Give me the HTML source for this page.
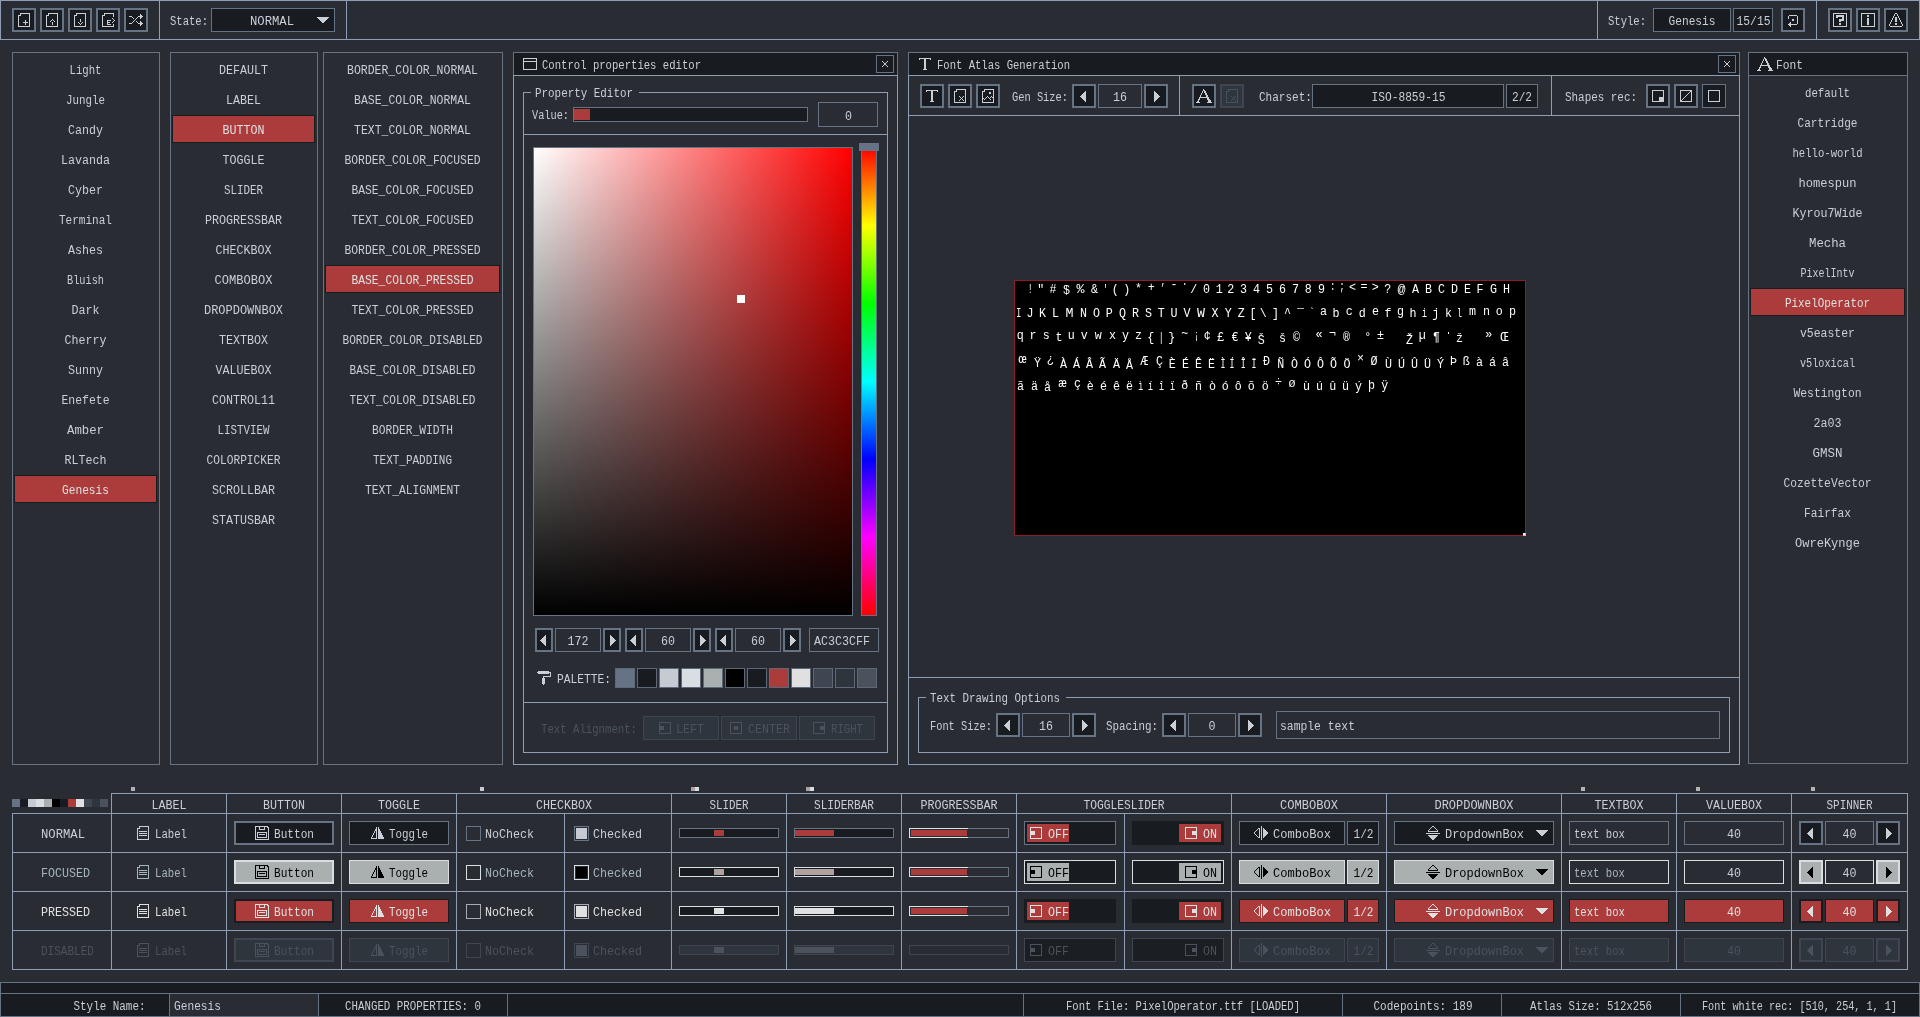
<!DOCTYPE html>
<html lang="en">
<head>
<meta charset="utf-8">
<title>rGuiStyler - Genesis</title>
<style>
html,body{margin:0;padding:0;background:#292c33;overflow:hidden}
body{width:1920px;height:1017px;position:relative}
svg{position:absolute;left:0;top:0;display:block}
#labels{will-change:transform}
svg rect,svg path{shape-rendering:crispEdges}
svg text{font-family:"Liberation Mono",monospace;font-size:13.7px;white-space:pre}
</style>
</head>
<body>
<svg width="1920" height="1017" viewBox="0 0 1920 1017">
<!-- toolbar -->
<path d="M0 0h160v40h-160zM1 1v38h158v-38z" fill="#8e9eb4" fill-rule="evenodd"/>
<path d="M159 0h188v40h-188zM160 1v38h186v-38z" fill="#8e9eb4" fill-rule="evenodd"/>
<path d="M346 0h1252v40h-1252zM347 1v38h1250v-38z" fill="#8e9eb4" fill-rule="evenodd"/>
<path d="M1597 0h220v40h-220zM1598 1v38h218v-38z" fill="#8e9eb4" fill-rule="evenodd"/>
<path d="M1816 0h104v40h-104zM1817 1v38h102v-38z" fill="#8e9eb4" fill-rule="evenodd"/>
<rect x="12" y="8" width="24" height="24" fill="#667384"/>
<rect x="14" y="10" width="20" height="20" fill="#181b1f"/>
<path d="M20 13h10v1h-10zM20 14h1v1h-1zM29 14h1v1h-1zM18 15h3v1h-3zM29 15h1v1h-1zM18 16h1v1h-1zM29 16h1v1h-1zM18 17h1v1h-1zM29 17h1v1h-1zM18 18h1v1h-1zM29 18h1v1h-1zM18 19h1v1h-1zM29 19h1v1h-1zM18 20h1v1h-1zM25 20h1v1h-1zM29 20h1v1h-1zM18 21h1v1h-1zM25 21h1v1h-1zM29 21h1v1h-1zM18 22h1v1h-1zM23 22h5v1h-5zM29 22h1v1h-1zM18 23h1v1h-1zM25 23h1v1h-1zM29 23h1v1h-1zM18 24h1v1h-1zM25 24h1v1h-1zM29 24h1v1h-1zM18 25h1v1h-1zM29 25h1v1h-1zM18 26h12v1h-12z" fill="#c9ced7"/>
<rect x="40" y="8" width="24" height="24" fill="#667384"/>
<rect x="42" y="10" width="20" height="20" fill="#181b1f"/>
<path d="M48 13h10v1h-10zM48 14h1v1h-1zM57 14h1v1h-1zM46 15h3v1h-3zM57 15h1v1h-1zM46 16h1v1h-1zM57 16h1v1h-1zM46 17h1v1h-1zM57 17h1v1h-1zM46 18h1v1h-1zM57 18h1v1h-1zM46 19h1v1h-1zM52 19h1v1h-1zM57 19h1v1h-1zM46 20h1v1h-1zM51 20h1v1h-1zM53 20h1v1h-1zM57 20h1v1h-1zM46 21h1v1h-1zM50 21h1v1h-1zM54 21h1v1h-1zM57 21h1v1h-1zM46 22h1v1h-1zM52 22h1v1h-1zM57 22h1v1h-1zM46 23h1v1h-1zM52 23h1v1h-1zM57 23h1v1h-1zM46 24h1v1h-1zM52 24h1v1h-1zM57 24h1v1h-1zM46 25h1v1h-1zM57 25h1v1h-1zM46 26h12v1h-12z" fill="#c9ced7"/>
<rect x="68" y="8" width="24" height="24" fill="#667384"/>
<rect x="70" y="10" width="20" height="20" fill="#181b1f"/>
<path d="M76 13h10v1h-10zM76 14h1v1h-1zM85 14h1v1h-1zM74 15h3v1h-3zM85 15h1v1h-1zM74 16h1v1h-1zM85 16h1v1h-1zM74 17h1v1h-1zM85 17h1v1h-1zM74 18h1v1h-1zM85 18h1v1h-1zM74 19h1v1h-1zM80 19h1v1h-1zM85 19h1v1h-1zM74 20h1v1h-1zM80 20h1v1h-1zM85 20h1v1h-1zM74 21h1v1h-1zM80 21h1v1h-1zM85 21h1v1h-1zM74 22h1v1h-1zM78 22h1v1h-1zM82 22h1v1h-1zM85 22h1v1h-1zM74 23h1v1h-1zM79 23h1v1h-1zM81 23h1v1h-1zM85 23h1v1h-1zM74 24h1v1h-1zM80 24h1v1h-1zM85 24h1v1h-1zM74 25h1v1h-1zM85 25h1v1h-1zM74 26h12v1h-12z" fill="#c9ced7"/>
<rect x="96" y="8" width="24" height="24" fill="#667384"/>
<rect x="98" y="10" width="20" height="20" fill="#181b1f"/>
<path d="M104 13h10v1h-10zM104 14h1v1h-1zM113 14h1v1h-1zM102 15h3v1h-3zM113 15h1v1h-1zM102 16h1v1h-1zM113 16h1v1h-1zM102 17h1v1h-1zM102 18h1v1h-1zM112 18h1v1h-1zM102 19h1v1h-1zM113 19h1v1h-1zM102 20h1v1h-1zM107 20h4v1h-4zM114 20h1v1h-1zM102 21h1v1h-1zM107 21h1v1h-1zM113 21h1v1h-1zM102 22h1v1h-1zM107 22h3v1h-3zM112 22h1v1h-1zM102 23h1v1h-1zM107 23h1v1h-1zM102 24h1v1h-1zM107 24h4v1h-4zM113 24h1v1h-1zM102 25h1v1h-1zM113 25h1v1h-1zM102 26h12v1h-12z" fill="#c9ced7"/>
<rect x="124" y="8" width="24" height="24" fill="#667384"/>
<rect x="126" y="10" width="20" height="20" fill="#181b1f"/>
<path d="M140 14h1v1h-1zM140 15h2v1h-2zM129 16h3v1h-3zM138 16h5v1h-5zM132 17h1v1h-1zM137 17h1v1h-1zM140 17h2v1h-2zM133 18h1v1h-1zM136 18h1v1h-1zM140 18h1v1h-1zM135 19h1v1h-1zM134 20h1v1h-1zM133 21h1v1h-1zM136 21h1v1h-1zM140 21h1v1h-1zM132 22h1v1h-1zM137 22h1v1h-1zM140 22h2v1h-2zM129 23h3v1h-3zM138 23h5v1h-5zM140 24h2v1h-2zM140 25h1v1h-1z" fill="#c9ced7"/>
<rect x="211" y="8" width="124" height="24" fill="#667384"/>
<rect x="212" y="9" width="122" height="22" fill="#181b1f"/>
<path d="M317 17h12v1h-12zM318 18h10v1h-10zM319 19h8v1h-8zM320 20h6v1h-6zM321 21h4v1h-4zM322 22h2v1h-2z" fill="#c9ced7"/>
<rect x="1653" y="8" width="78" height="24" fill="#667384"/>
<rect x="1654" y="9" width="76" height="22" fill="#181b1f"/>
<rect x="1733" y="8" width="40" height="24" fill="#667384"/>
<rect x="1734" y="9" width="38" height="22" fill="#181b1f"/>
<rect x="1781" y="8" width="24" height="24" fill="#667384"/>
<rect x="1783" y="10" width="20" height="20" fill="#181b1f"/>
<path d="M1789 15h8v1h-8zM1788 16h1v1h-1zM1797 16h1v1h-1zM1788 17h1v1h-1zM1797 17h1v1h-1zM1788 18h1v1h-1zM1797 18h1v1h-1zM1792 19h2v1h-2zM1797 19h1v1h-1zM1792 20h2v1h-2zM1797 20h1v1h-1zM1797 21h1v1h-1zM1790 22h1v1h-1zM1797 22h1v1h-1zM1789 23h2v1h-2zM1797 23h1v1h-1zM1788 24h9v1h-9zM1789 25h2v1h-2zM1790 26h1v1h-1z" fill="#c9ced7"/>
<rect x="1828" y="8" width="24" height="24" fill="#667384"/>
<rect x="1830" y="10" width="20" height="20" fill="#181b1f"/>
<path d="M1833 13h14v1h-14zM1833 14h1v1h-1zM1846 14h1v1h-1zM1833 15h1v1h-1zM1836 15h8v1h-8zM1846 15h1v1h-1zM1833 16h1v1h-1zM1836 16h8v1h-8zM1846 16h1v1h-1zM1833 17h1v1h-1zM1836 17h2v1h-2zM1842 17h2v1h-2zM1846 17h1v1h-1zM1833 18h1v1h-1zM1842 18h2v1h-2zM1846 18h1v1h-1zM1833 19h1v1h-1zM1839 19h5v1h-5zM1846 19h1v1h-1zM1833 20h1v1h-1zM1839 20h5v1h-5zM1846 20h1v1h-1zM1833 21h1v1h-1zM1839 21h2v1h-2zM1846 21h1v1h-1zM1833 22h1v1h-1zM1846 22h1v1h-1zM1833 23h1v1h-1zM1839 23h2v1h-2zM1846 23h1v1h-1zM1833 24h1v1h-1zM1839 24h2v1h-2zM1846 24h1v1h-1zM1833 25h1v1h-1zM1846 25h1v1h-1zM1833 26h14v1h-14z" fill="#c9ced7"/>
<rect x="1856" y="8" width="24" height="24" fill="#667384"/>
<rect x="1858" y="10" width="20" height="20" fill="#181b1f"/>
<path d="M1861 13h14v1h-14zM1861 14h1v1h-1zM1874 14h1v1h-1zM1861 15h1v1h-1zM1867 15h2v1h-2zM1874 15h1v1h-1zM1861 16h1v1h-1zM1867 16h2v1h-2zM1874 16h1v1h-1zM1861 17h1v1h-1zM1874 17h1v1h-1zM1861 18h1v1h-1zM1867 18h2v1h-2zM1874 18h1v1h-1zM1861 19h1v1h-1zM1867 19h2v1h-2zM1874 19h1v1h-1zM1861 20h1v1h-1zM1867 20h2v1h-2zM1874 20h1v1h-1zM1861 21h1v1h-1zM1867 21h2v1h-2zM1874 21h1v1h-1zM1861 22h1v1h-1zM1867 22h2v1h-2zM1874 22h1v1h-1zM1861 23h1v1h-1zM1867 23h2v1h-2zM1874 23h1v1h-1zM1861 24h1v1h-1zM1867 24h2v1h-2zM1874 24h1v1h-1zM1861 25h1v1h-1zM1874 25h1v1h-1zM1861 26h14v1h-14z" fill="#c9ced7"/>
<rect x="1884" y="8" width="24" height="24" fill="#667384"/>
<rect x="1886" y="10" width="20" height="20" fill="#181b1f"/>
<path d="M1895 13h2v1h-2zM1894 14h1v1h-1zM1897 14h1v1h-1zM1894 15h1v1h-1zM1897 15h1v1h-1zM1893 16h1v1h-1zM1898 16h1v1h-1zM1893 17h1v1h-1zM1895 17h2v1h-2zM1898 17h1v1h-1zM1892 18h1v1h-1zM1895 18h2v1h-2zM1899 18h1v1h-1zM1892 19h1v1h-1zM1895 19h2v1h-2zM1899 19h1v1h-1zM1891 20h1v1h-1zM1895 20h2v1h-2zM1900 20h1v1h-1zM1891 21h1v1h-1zM1895 21h2v1h-2zM1900 21h1v1h-1zM1890 22h1v1h-1zM1901 22h1v1h-1zM1890 23h1v1h-1zM1895 23h2v1h-2zM1901 23h1v1h-1zM1889 24h1v1h-1zM1895 24h2v1h-2zM1902 24h1v1h-1zM1889 25h1v1h-1zM1902 25h1v1h-1zM1890 26h12v1h-12z" fill="#c9ced7"/>
<!-- style / control / property lists -->
<path d="M12 52h148v713h-148zM13 53v711h146v-711z" fill="#667384" fill-rule="evenodd"/>
<rect x="14" y="475" width="143" height="28" fill="#181b1f"/>
<rect x="15" y="476" width="141" height="26" fill="#ac3c3c"/>
<path d="M170 52h148v713h-148zM171 53v711h146v-711z" fill="#667384" fill-rule="evenodd"/>
<rect x="172" y="115" width="143" height="28" fill="#181b1f"/>
<rect x="173" y="116" width="141" height="26" fill="#ac3c3c"/>
<path d="M323 52h180v713h-180zM324 53v711h178v-711z" fill="#667384" fill-rule="evenodd"/>
<rect x="325" y="265" width="175" height="28" fill="#181b1f"/>
<rect x="326" y="266" width="173" height="26" fill="#ac3c3c"/>
<!-- control properties editor window -->
<rect x="513" y="52" width="385" height="24" fill="#667384"/>
<rect x="514" y="53" width="383" height="22" fill="#181b1f"/>
<path d="M513 75h385v690h-385zM514 76v688h383v-688z" fill="#8e9eb4" fill-rule="evenodd"/>
<path d="M523 58h14v1h-14zM523 59h1v1h-1zM536 59h1v1h-1zM523 60h1v1h-1zM536 60h1v1h-1zM523 61h14v1h-14zM523 62h1v1h-1zM536 62h1v1h-1zM523 63h1v1h-1zM536 63h1v1h-1zM523 64h1v1h-1zM536 64h1v1h-1zM523 65h1v1h-1zM536 65h1v1h-1zM523 66h1v1h-1zM536 66h1v1h-1zM523 67h1v1h-1zM536 67h1v1h-1zM523 68h1v1h-1zM536 68h1v1h-1zM523 69h14v1h-14z" fill="#c9ced7"/>
<rect x="876" y="55" width="18" height="18" fill="#667384"/>
<rect x="877" y="56" width="16" height="16" fill="#181b1f"/>
<path d="M882 61h1v1h-1zM887 61h1v1h-1zM883 62h1v1h-1zM886 62h1v1h-1zM884 63h2v1h-2zM884 64h2v1h-2zM883 65h1v1h-1zM886 65h1v1h-1zM882 66h1v1h-1zM887 66h1v1h-1z" fill="#c9ced7"/>
<rect x="523" y="92" width="1" height="43" fill="#8e9eb4"/>
<rect x="887" y="92" width="1" height="43" fill="#8e9eb4"/>
<rect x="523" y="134" width="365" height="1" fill="#8e9eb4"/>
<rect x="523" y="92" width="8" height="1" fill="#8e9eb4"/>
<rect x="639" y="92" width="249" height="1" fill="#8e9eb4"/>
<rect x="573" y="107" width="235" height="15" fill="#667384"/>
<rect x="574" y="108" width="233" height="13" fill="#181b1f"/>
<rect x="574" y="109" width="16" height="11" fill="#ac3c3c"/>
<rect x="818" y="102" width="60" height="25" fill="#667384"/>
<rect x="819" y="103" width="58" height="23" fill="#292c33"/>
<rect x="523" y="134" width="1" height="619" fill="#8e9eb4"/>
<rect x="887" y="134" width="1" height="619" fill="#8e9eb4"/>
<rect x="523" y="702" width="365" height="1" fill="#8e9eb4"/>
<rect x="523" y="752" width="365" height="1" fill="#8e9eb4"/>
<defs><linearGradient id="gh" x1="0" y1="0" x2="1" y2="0"><stop offset="0" stop-color="#fff"/><stop offset="1" stop-color="#f00"/></linearGradient><linearGradient id="gv" x1="0" y1="0" x2="0" y2="1"><stop offset="0" stop-color="#000" stop-opacity="0"/><stop offset="1" stop-color="#000"/></linearGradient><linearGradient id="hue" x1="0" y1="0" x2="0" y2="1"><stop offset="0" stop-color="#f00"/><stop offset="0.1667" stop-color="#ff0"/><stop offset="0.3333" stop-color="#0f0"/><stop offset="0.5" stop-color="#0ff"/><stop offset="0.6667" stop-color="#00f"/><stop offset="0.8333" stop-color="#f0f"/><stop offset="1" stop-color="#f00"/></linearGradient></defs>
<rect x="533" y="147" width="320" height="469" fill="#667384"/>
<rect x="534" y="148" width="318" height="467" fill="url(#gh)"/>
<rect x="534" y="148" width="318" height="467" fill="url(#gv)"/>
<rect x="737" y="295" width="8" height="8" fill="#ffffff"/>
<rect x="861" y="147" width="16" height="469" fill="#667384"/>
<rect x="862" y="148" width="14" height="467" fill="url(#hue)"/>
<rect x="859" y="143" width="20" height="8" fill="#667384"/>
<rect x="535" y="628" width="18" height="24" fill="#667384"/>
<rect x="537" y="630" width="14" height="20" fill="#181b1f"/>
<path d="M545 635h1v1h-1zM544 636h2v1h-2zM543 637h3v1h-3zM542 638h4v1h-4zM541 639h5v1h-5zM540 640h6v1h-6zM541 641h5v1h-5zM542 642h4v1h-4zM543 643h3v1h-3zM544 644h2v1h-2zM545 645h1v1h-1z" fill="#c9ced7"/>
<rect x="555" y="628" width="46" height="24" fill="#667384"/>
<rect x="556" y="629" width="44" height="22" fill="#292c33"/>
<rect x="603" y="628" width="18" height="24" fill="#667384"/>
<rect x="605" y="630" width="14" height="20" fill="#181b1f"/>
<path d="M610 635h1v1h-1zM610 636h2v1h-2zM610 637h3v1h-3zM610 638h4v1h-4zM610 639h5v1h-5zM610 640h6v1h-6zM610 641h5v1h-5zM610 642h4v1h-4zM610 643h3v1h-3zM610 644h2v1h-2zM610 645h1v1h-1z" fill="#c9ced7"/>
<rect x="625" y="628" width="18" height="24" fill="#667384"/>
<rect x="627" y="630" width="14" height="20" fill="#181b1f"/>
<path d="M635 635h1v1h-1zM634 636h2v1h-2zM633 637h3v1h-3zM632 638h4v1h-4zM631 639h5v1h-5zM630 640h6v1h-6zM631 641h5v1h-5zM632 642h4v1h-4zM633 643h3v1h-3zM634 644h2v1h-2zM635 645h1v1h-1z" fill="#c9ced7"/>
<rect x="645" y="628" width="46" height="24" fill="#667384"/>
<rect x="646" y="629" width="44" height="22" fill="#292c33"/>
<rect x="693" y="628" width="18" height="24" fill="#667384"/>
<rect x="695" y="630" width="14" height="20" fill="#181b1f"/>
<path d="M700 635h1v1h-1zM700 636h2v1h-2zM700 637h3v1h-3zM700 638h4v1h-4zM700 639h5v1h-5zM700 640h6v1h-6zM700 641h5v1h-5zM700 642h4v1h-4zM700 643h3v1h-3zM700 644h2v1h-2zM700 645h1v1h-1z" fill="#c9ced7"/>
<rect x="715" y="628" width="18" height="24" fill="#667384"/>
<rect x="717" y="630" width="14" height="20" fill="#181b1f"/>
<path d="M725 635h1v1h-1zM724 636h2v1h-2zM723 637h3v1h-3zM722 638h4v1h-4zM721 639h5v1h-5zM720 640h6v1h-6zM721 641h5v1h-5zM722 642h4v1h-4zM723 643h3v1h-3zM724 644h2v1h-2zM725 645h1v1h-1z" fill="#c9ced7"/>
<rect x="735" y="628" width="46" height="24" fill="#667384"/>
<rect x="736" y="629" width="44" height="22" fill="#292c33"/>
<rect x="783" y="628" width="18" height="24" fill="#667384"/>
<rect x="785" y="630" width="14" height="20" fill="#181b1f"/>
<path d="M790 635h1v1h-1zM790 636h2v1h-2zM790 637h3v1h-3zM790 638h4v1h-4zM790 639h5v1h-5zM790 640h6v1h-6zM790 641h5v1h-5zM790 642h4v1h-4zM790 643h3v1h-3zM790 644h2v1h-2zM790 645h1v1h-1z" fill="#c9ced7"/>
<rect x="809" y="628" width="70" height="24" fill="#667384"/>
<rect x="810" y="629" width="68" height="22" fill="#292c33"/>
<path d="M538 671h11v1h-11zM537 672h14v1h-14zM538 673h11v1h-11zM550 673h1v1h-1zM550 674h1v1h-1zM550 675h1v1h-1zM543 676h8v1h-8zM543 677h1v1h-1zM542 678h3v1h-3zM542 679h3v1h-3zM542 680h3v1h-3zM542 681h3v1h-3zM542 682h3v1h-3zM542 683h3v1h-3zM543 684h1v1h-1z" fill="#c9ced7"/>
<rect x="615" y="668" width="20" height="20" fill="#5d6979"/>
<rect x="616" y="669" width="18" height="18" fill="#667384"/>
<rect x="637" y="668" width="20" height="20" fill="#5d6979"/>
<rect x="638" y="669" width="18" height="18" fill="#181b1f"/>
<rect x="659" y="668" width="20" height="20" fill="#5d6979"/>
<rect x="660" y="669" width="18" height="18" fill="#c5cad3"/>
<rect x="681" y="668" width="20" height="20" fill="#5d6979"/>
<rect x="682" y="669" width="18" height="18" fill="#d8dee2"/>
<rect x="703" y="668" width="20" height="20" fill="#5d6979"/>
<rect x="704" y="669" width="18" height="18" fill="#aab0b0"/>
<rect x="725" y="668" width="20" height="20" fill="#5d6979"/>
<rect x="726" y="669" width="18" height="18" fill="#000000"/>
<rect x="747" y="668" width="20" height="20" fill="#5d6979"/>
<rect x="748" y="669" width="18" height="18" fill="#181b1f"/>
<rect x="769" y="668" width="20" height="20" fill="#5d6979"/>
<rect x="770" y="669" width="18" height="18" fill="#ac3c3c"/>
<rect x="791" y="668" width="20" height="20" fill="#5d6979"/>
<rect x="792" y="669" width="18" height="18" fill="#e0e0e0"/>
<rect x="813" y="668" width="20" height="20" fill="#5d6979"/>
<rect x="814" y="669" width="18" height="18" fill="#3f4652"/>
<rect x="835" y="668" width="20" height="20" fill="#5d6979"/>
<rect x="836" y="669" width="18" height="18" fill="#2f353d"/>
<rect x="857" y="668" width="20" height="20" fill="#5d6979"/>
<rect x="858" y="669" width="18" height="18" fill="#4b525b"/>
<rect x="643" y="716" width="76" height="24" fill="#3f4652"/>
<rect x="644" y="717" width="74" height="22" fill="#2f353d"/>
<path d="M659 722h12v1h-12zM659 723h1v1h-1zM670 723h1v1h-1zM659 724h1v1h-1zM670 724h1v1h-1zM659 725h1v1h-1zM670 725h1v1h-1zM659 726h5v1h-5zM670 726h1v1h-1zM659 727h5v1h-5zM670 727h1v1h-1zM659 728h5v1h-5zM670 728h1v1h-1zM659 729h5v1h-5zM670 729h1v1h-1zM659 730h1v1h-1zM670 730h1v1h-1zM659 731h1v1h-1zM670 731h1v1h-1zM659 732h1v1h-1zM670 732h1v1h-1zM659 733h12v1h-12z" fill="#4b525b"/>
<rect x="721" y="716" width="76" height="24" fill="#3f4652"/>
<rect x="722" y="717" width="74" height="22" fill="#2f353d"/>
<path d="M730 722h12v1h-12zM730 723h1v1h-1zM741 723h1v1h-1zM730 724h1v1h-1zM741 724h1v1h-1zM730 725h1v1h-1zM741 725h1v1h-1zM730 726h1v1h-1zM734 726h4v1h-4zM741 726h1v1h-1zM730 727h1v1h-1zM734 727h4v1h-4zM741 727h1v1h-1zM730 728h1v1h-1zM734 728h4v1h-4zM741 728h1v1h-1zM730 729h1v1h-1zM734 729h4v1h-4zM741 729h1v1h-1zM730 730h1v1h-1zM741 730h1v1h-1zM730 731h1v1h-1zM741 731h1v1h-1zM730 732h1v1h-1zM741 732h1v1h-1zM730 733h12v1h-12z" fill="#4b525b"/>
<rect x="799" y="716" width="76" height="24" fill="#3f4652"/>
<rect x="800" y="717" width="74" height="22" fill="#2f353d"/>
<path d="M813 722h12v1h-12zM813 723h1v1h-1zM824 723h1v1h-1zM813 724h1v1h-1zM824 724h1v1h-1zM813 725h1v1h-1zM824 725h1v1h-1zM813 726h1v1h-1zM820 726h5v1h-5zM813 727h1v1h-1zM820 727h5v1h-5zM813 728h1v1h-1zM820 728h5v1h-5zM813 729h1v1h-1zM820 729h5v1h-5zM813 730h1v1h-1zM824 730h1v1h-1zM813 731h1v1h-1zM824 731h1v1h-1zM813 732h1v1h-1zM824 732h1v1h-1zM813 733h12v1h-12z" fill="#4b525b"/>
<!-- font atlas generation window -->
<rect x="908" y="52" width="832" height="24" fill="#667384"/>
<rect x="909" y="53" width="830" height="22" fill="#181b1f"/>
<path d="M908 75h832v690h-832zM909 76v688h830v-688z" fill="#8e9eb4" fill-rule="evenodd"/>
<path d="M919 58h12v1h-12zM919 59h1v1h-1zM924 59h2v1h-2zM930 59h1v1h-1zM924 60h2v1h-2zM924 61h2v1h-2zM924 62h2v1h-2zM924 63h2v1h-2zM924 64h2v1h-2zM924 65h2v1h-2zM924 66h2v1h-2zM924 67h2v1h-2zM924 68h2v1h-2zM923 69h4v1h-4z" fill="#c9ced7"/>
<rect x="1718" y="55" width="18" height="18" fill="#667384"/>
<rect x="1719" y="56" width="16" height="16" fill="#181b1f"/>
<path d="M1724 61h1v1h-1zM1729 61h1v1h-1zM1725 62h1v1h-1zM1728 62h1v1h-1zM1726 63h2v1h-2zM1726 64h2v1h-2zM1725 65h1v1h-1zM1728 65h1v1h-1zM1724 66h1v1h-1zM1729 66h1v1h-1z" fill="#c9ced7"/>
<rect x="908" y="115" width="832" height="1" fill="#8e9eb4"/>
<rect x="1179" y="76" width="1" height="40" fill="#8e9eb4"/>
<rect x="1551" y="76" width="1" height="40" fill="#8e9eb4"/>
<rect x="920" y="84" width="24" height="24" fill="#667384"/>
<rect x="922" y="86" width="20" height="20" fill="#181b1f"/>
<path d="M926 90h12v1h-12zM926 91h1v1h-1zM931 91h2v1h-2zM937 91h1v1h-1zM931 92h2v1h-2zM931 93h2v1h-2zM931 94h2v1h-2zM931 95h2v1h-2zM931 96h2v1h-2zM931 97h2v1h-2zM931 98h2v1h-2zM931 99h2v1h-2zM931 100h2v1h-2zM930 101h4v1h-4z" fill="#c9ced7"/>
<rect x="948" y="84" width="24" height="24" fill="#667384"/>
<rect x="950" y="86" width="20" height="20" fill="#181b1f"/>
<path d="M956 89h10v1h-10zM956 90h1v1h-1zM965 90h1v1h-1zM954 91h3v1h-3zM965 91h1v1h-1zM954 92h1v1h-1zM965 92h1v1h-1zM954 93h1v1h-1zM965 93h1v1h-1zM954 94h1v1h-1zM965 94h1v1h-1zM954 95h1v1h-1zM965 95h1v1h-1zM954 96h1v1h-1zM959 96h1v1h-1zM963 96h1v1h-1zM965 96h1v1h-1zM954 97h1v1h-1zM960 97h1v1h-1zM962 97h1v1h-1zM965 97h1v1h-1zM954 98h1v1h-1zM961 98h1v1h-1zM965 98h1v1h-1zM954 99h1v1h-1zM960 99h1v1h-1zM962 99h1v1h-1zM965 99h1v1h-1zM954 100h1v1h-1zM959 100h1v1h-1zM963 100h1v1h-1zM965 100h1v1h-1zM954 101h1v1h-1zM965 101h1v1h-1zM954 102h12v1h-12z" fill="#c9ced7"/>
<rect x="976" y="84" width="24" height="24" fill="#667384"/>
<rect x="978" y="86" width="20" height="20" fill="#181b1f"/>
<path d="M984 89h10v1h-10zM984 90h1v1h-1zM993 90h1v1h-1zM982 91h3v1h-3zM993 91h1v1h-1zM982 92h1v1h-1zM989 92h2v1h-2zM993 92h1v1h-1zM982 93h1v1h-1zM989 93h2v1h-2zM993 93h1v1h-1zM982 94h1v1h-1zM993 94h1v1h-1zM982 95h1v1h-1zM993 95h1v1h-1zM982 96h1v1h-1zM987 96h1v1h-1zM991 96h1v1h-1zM993 96h1v1h-1zM982 97h1v1h-1zM986 97h1v1h-1zM988 97h1v1h-1zM990 97h1v1h-1zM992 97h2v1h-2zM982 98h2v1h-2zM985 98h1v1h-1zM989 98h1v1h-1zM993 98h1v1h-1zM982 99h1v1h-1zM984 99h1v1h-1zM990 99h1v1h-1zM993 99h1v1h-1zM982 100h1v1h-1zM993 100h1v1h-1zM982 101h1v1h-1zM993 101h1v1h-1zM982 102h12v1h-12z" fill="#c9ced7"/>
<rect x="1072" y="84" width="24" height="24" fill="#667384"/>
<rect x="1074" y="86" width="20" height="20" fill="#181b1f"/>
<path d="M1085 91h1v1h-1zM1084 92h2v1h-2zM1083 93h3v1h-3zM1082 94h4v1h-4zM1081 95h5v1h-5zM1080 96h6v1h-6zM1081 97h5v1h-5zM1082 98h4v1h-4zM1083 99h3v1h-3zM1084 100h2v1h-2zM1085 101h1v1h-1z" fill="#c9ced7"/>
<rect x="1098" y="84" width="44" height="24" fill="#667384"/>
<rect x="1099" y="85" width="42" height="22" fill="#292c33"/>
<rect x="1144" y="84" width="24" height="24" fill="#667384"/>
<rect x="1146" y="86" width="20" height="20" fill="#181b1f"/>
<path d="M1154 91h1v1h-1zM1154 92h2v1h-2zM1154 93h3v1h-3zM1154 94h4v1h-4zM1154 95h5v1h-5zM1154 96h6v1h-6zM1154 97h5v1h-5zM1154 98h4v1h-4zM1154 99h3v1h-3zM1154 100h2v1h-2zM1154 101h1v1h-1z" fill="#c9ced7"/>
<rect x="1192" y="84" width="24" height="24" fill="#667384"/>
<rect x="1194" y="86" width="20" height="20" fill="#181b1f"/>
<path d="M1203 89h1v1h-1zM1203 90h2v1h-2zM1202 91h1v1h-1zM1204 91h2v1h-2zM1202 92h1v1h-1zM1204 92h2v1h-2zM1201 93h1v1h-1zM1205 93h2v1h-2zM1201 94h1v1h-1zM1205 94h2v1h-2zM1200 95h1v1h-1zM1206 95h2v1h-2zM1200 96h1v1h-1zM1206 96h2v1h-2zM1199 97h10v1h-10zM1199 98h1v1h-1zM1207 98h2v1h-2zM1198 99h2v1h-2zM1207 99h3v1h-3zM1198 100h1v1h-1zM1208 100h3v1h-3zM1197 101h2v1h-2zM1208 101h3v1h-3zM1196 102h4v1h-4zM1207 102h5v1h-5z" fill="#c9ced7"/>
<rect x="1220" y="84" width="24" height="24" fill="#3f4652"/>
<rect x="1222" y="86" width="20" height="20" fill="#2f353d"/>
<path d="M1228 89h10v1h-10zM1228 90h1v1h-1zM1237 90h1v1h-1zM1226 91h3v1h-3zM1237 91h1v1h-1zM1226 92h1v1h-1zM1237 92h1v1h-1zM1226 93h1v1h-1zM1237 93h1v1h-1zM1226 94h1v1h-1zM1237 94h1v1h-1zM1226 95h1v1h-1zM1237 95h1v1h-1zM1226 96h1v1h-1zM1231 96h1v1h-1zM1235 96h1v1h-1zM1237 96h1v1h-1zM1226 97h1v1h-1zM1232 97h1v1h-1zM1234 97h1v1h-1zM1237 97h1v1h-1zM1226 98h1v1h-1zM1233 98h1v1h-1zM1237 98h1v1h-1zM1226 99h1v1h-1zM1232 99h1v1h-1zM1234 99h1v1h-1zM1237 99h1v1h-1zM1226 100h1v1h-1zM1231 100h1v1h-1zM1235 100h1v1h-1zM1237 100h1v1h-1zM1226 101h1v1h-1zM1237 101h1v1h-1zM1226 102h12v1h-12z" fill="#4b525b"/>
<rect x="1312" y="84" width="192" height="24" fill="#667384"/>
<rect x="1313" y="85" width="190" height="22" fill="#181b1f"/>
<rect x="1506" y="84" width="32" height="24" fill="#667384"/>
<rect x="1507" y="85" width="30" height="22" fill="#181b1f"/>
<rect x="1646" y="84" width="24" height="24" fill="#667384"/>
<rect x="1648" y="86" width="20" height="20" fill="#181b1f"/>
<path d="M1652 90h12v1h-12zM1652 91h1v1h-1zM1663 91h1v1h-1zM1652 92h1v1h-1zM1663 92h1v1h-1zM1652 93h1v1h-1zM1663 93h1v1h-1zM1652 94h1v1h-1zM1663 94h1v1h-1zM1652 95h1v1h-1zM1663 95h1v1h-1zM1652 96h1v1h-1zM1663 96h1v1h-1zM1652 97h1v1h-1zM1659 97h5v1h-5zM1652 98h1v1h-1zM1659 98h5v1h-5zM1652 99h1v1h-1zM1659 99h5v1h-5zM1652 100h1v1h-1zM1659 100h5v1h-5zM1652 101h12v1h-12z" fill="#c9ced7"/>
<rect x="1674" y="84" width="24" height="24" fill="#667384"/>
<rect x="1676" y="86" width="20" height="20" fill="#181b1f"/>
<path d="M1680 90h12v1h-12zM1680 91h1v1h-1zM1690 91h2v1h-2zM1680 92h1v1h-1zM1689 92h1v1h-1zM1691 92h1v1h-1zM1680 93h1v1h-1zM1688 93h1v1h-1zM1691 93h1v1h-1zM1680 94h1v1h-1zM1687 94h1v1h-1zM1691 94h1v1h-1zM1680 95h1v1h-1zM1686 95h1v1h-1zM1691 95h1v1h-1zM1680 96h1v1h-1zM1685 96h1v1h-1zM1691 96h1v1h-1zM1680 97h1v1h-1zM1684 97h1v1h-1zM1691 97h1v1h-1zM1680 98h1v1h-1zM1683 98h1v1h-1zM1691 98h1v1h-1zM1680 99h1v1h-1zM1682 99h1v1h-1zM1691 99h1v1h-1zM1680 100h2v1h-2zM1691 100h1v1h-1zM1680 101h12v1h-12z" fill="#c9ced7"/>
<rect x="1702" y="84" width="24" height="24" fill="#667384"/>
<rect x="1703" y="85" width="22" height="22" fill="#181b1f"/>
<path d="M1708 90h12v1h-12zM1708 91h1v1h-1zM1719 91h1v1h-1zM1708 92h1v1h-1zM1719 92h1v1h-1zM1708 93h1v1h-1zM1719 93h1v1h-1zM1708 94h1v1h-1zM1719 94h1v1h-1zM1708 95h1v1h-1zM1719 95h1v1h-1zM1708 96h1v1h-1zM1719 96h1v1h-1zM1708 97h1v1h-1zM1719 97h1v1h-1zM1708 98h1v1h-1zM1719 98h1v1h-1zM1708 99h1v1h-1zM1719 99h1v1h-1zM1708 100h1v1h-1zM1719 100h1v1h-1zM1708 101h12v1h-12z" fill="#c9ced7"/>
<rect x="1014" y="280" width="512" height="256" fill="#000000"/>
<path d="M1014 280h512v256h-512zM1015 281v254h510v-254z" fill="#8e1d28" fill-rule="evenodd"/>
<rect x="1523" y="533" width="3" height="3" fill="#f7a3ac"/>
<rect x="1523" y="533" width="2" height="2" fill="#f4f6f8"/>
<rect x="908" y="677" width="832" height="1" fill="#8e9eb4"/>
<rect x="918" y="697" width="1" height="56" fill="#8e9eb4"/>
<rect x="1729" y="697" width="1" height="56" fill="#8e9eb4"/>
<rect x="918" y="752" width="812" height="1" fill="#8e9eb4"/>
<rect x="918" y="697" width="8" height="1" fill="#8e9eb4"/>
<rect x="1066" y="697" width="664" height="1" fill="#8e9eb4"/>
<rect x="996" y="713" width="24" height="24" fill="#667384"/>
<rect x="998" y="715" width="20" height="20" fill="#181b1f"/>
<path d="M1009 720h1v1h-1zM1008 721h2v1h-2zM1007 722h3v1h-3zM1006 723h4v1h-4zM1005 724h5v1h-5zM1004 725h6v1h-6zM1005 726h5v1h-5zM1006 727h4v1h-4zM1007 728h3v1h-3zM1008 729h2v1h-2zM1009 730h1v1h-1z" fill="#c9ced7"/>
<rect x="1022" y="713" width="48" height="24" fill="#667384"/>
<rect x="1023" y="714" width="46" height="22" fill="#292c33"/>
<rect x="1072" y="713" width="24" height="24" fill="#667384"/>
<rect x="1074" y="715" width="20" height="20" fill="#181b1f"/>
<path d="M1082 720h1v1h-1zM1082 721h2v1h-2zM1082 722h3v1h-3zM1082 723h4v1h-4zM1082 724h5v1h-5zM1082 725h6v1h-6zM1082 726h5v1h-5zM1082 727h4v1h-4zM1082 728h3v1h-3zM1082 729h2v1h-2zM1082 730h1v1h-1z" fill="#c9ced7"/>
<rect x="1162" y="713" width="24" height="24" fill="#667384"/>
<rect x="1164" y="715" width="20" height="20" fill="#181b1f"/>
<path d="M1175 720h1v1h-1zM1174 721h2v1h-2zM1173 722h3v1h-3zM1172 723h4v1h-4zM1171 724h5v1h-5zM1170 725h6v1h-6zM1171 726h5v1h-5zM1172 727h4v1h-4zM1173 728h3v1h-3zM1174 729h2v1h-2zM1175 730h1v1h-1z" fill="#c9ced7"/>
<rect x="1188" y="713" width="48" height="24" fill="#667384"/>
<rect x="1189" y="714" width="46" height="22" fill="#292c33"/>
<rect x="1238" y="713" width="24" height="24" fill="#667384"/>
<rect x="1240" y="715" width="20" height="20" fill="#181b1f"/>
<path d="M1248 720h1v1h-1zM1248 721h2v1h-2zM1248 722h3v1h-3zM1248 723h4v1h-4zM1248 724h5v1h-5zM1248 725h6v1h-6zM1248 726h5v1h-5zM1248 727h4v1h-4zM1248 728h3v1h-3zM1248 729h2v1h-2zM1248 730h1v1h-1z" fill="#c9ced7"/>
<rect x="1276" y="711" width="444" height="28" fill="#667384"/>
<rect x="1277" y="712" width="442" height="26" fill="#292c33"/>
<!-- font list -->
<path d="M1748 52h160v712h-160zM1749 53v710h158v-710z" fill="#667384" fill-rule="evenodd"/>
<rect x="1750" y="288" width="155" height="28" fill="#181b1f"/>
<rect x="1751" y="289" width="153" height="26" fill="#ac3c3c"/>
<rect x="1748" y="52" width="160" height="24" fill="#667384"/>
<rect x="1749" y="53" width="158" height="22" fill="#181b1f"/>
<path d="M1764 57h1v1h-1zM1764 58h2v1h-2zM1763 59h1v1h-1zM1765 59h2v1h-2zM1763 60h1v1h-1zM1765 60h2v1h-2zM1762 61h1v1h-1zM1766 61h2v1h-2zM1762 62h1v1h-1zM1766 62h2v1h-2zM1761 63h1v1h-1zM1767 63h2v1h-2zM1761 64h1v1h-1zM1767 64h2v1h-2zM1760 65h10v1h-10zM1760 66h1v1h-1zM1768 66h2v1h-2zM1759 67h2v1h-2zM1768 67h3v1h-3zM1759 68h1v1h-1zM1769 68h3v1h-3zM1758 69h2v1h-2zM1769 69h3v1h-3zM1757 70h4v1h-4zM1768 70h5v1h-5z" fill="#c9ced7"/>
<!-- controls preview table -->
<rect x="12" y="799" width="8" height="8" fill="#667384"/>
<rect x="20" y="799" width="8" height="8" fill="#181b1f"/>
<rect x="28" y="799" width="8" height="8" fill="#c5cad3"/>
<rect x="36" y="799" width="8" height="8" fill="#d8dee2"/>
<rect x="44" y="799" width="8" height="8" fill="#aab0b0"/>
<rect x="52" y="799" width="8" height="8" fill="#000000"/>
<rect x="60" y="799" width="8" height="8" fill="#181b1f"/>
<rect x="68" y="799" width="8" height="8" fill="#ac3c3c"/>
<rect x="76" y="799" width="8" height="8" fill="#e0e0e0"/>
<rect x="84" y="799" width="8" height="8" fill="#3f4652"/>
<rect x="92" y="799" width="8" height="8" fill="#2f353d"/>
<rect x="100" y="799" width="8" height="8" fill="#4b525b"/>
<rect x="131" y="787" width="4" height="4" fill="#a6b6ba"/>
<rect x="480" y="787" width="4" height="4" fill="#c5cad3"/>
<rect x="691" y="787" width="4" height="4" fill="#b0a19f"/>
<rect x="695" y="787" width="4" height="4" fill="#d8dee2"/>
<rect x="806" y="787" width="4" height="4" fill="#b0a19f"/>
<rect x="810" y="787" width="4" height="4" fill="#d8dee2"/>
<rect x="1581" y="787" width="4" height="4" fill="#b4b4b4"/>
<rect x="1696" y="787" width="4" height="4" fill="#b4b4b4"/>
<rect x="1811" y="787" width="4" height="4" fill="#b4b4b4"/>
<rect x="111" y="793" width="1797" height="1" fill="#8e9eb4"/>
<rect x="12" y="813" width="1896" height="1" fill="#8e9eb4"/>
<rect x="12" y="852" width="1896" height="1" fill="#8e9eb4"/>
<rect x="12" y="891" width="1896" height="1" fill="#8e9eb4"/>
<rect x="12" y="930" width="1896" height="1" fill="#8e9eb4"/>
<rect x="12" y="969" width="1896" height="1" fill="#8e9eb4"/>
<rect x="12" y="813" width="1" height="157" fill="#8e9eb4"/>
<rect x="111" y="793" width="1" height="177" fill="#8e9eb4"/>
<rect x="226" y="793" width="1" height="177" fill="#8e9eb4"/>
<rect x="341" y="793" width="1" height="177" fill="#8e9eb4"/>
<rect x="456" y="793" width="1" height="177" fill="#8e9eb4"/>
<rect x="671" y="793" width="1" height="177" fill="#8e9eb4"/>
<rect x="786" y="793" width="1" height="177" fill="#8e9eb4"/>
<rect x="901" y="793" width="1" height="177" fill="#8e9eb4"/>
<rect x="1016" y="793" width="1" height="177" fill="#8e9eb4"/>
<rect x="1231" y="793" width="1" height="177" fill="#8e9eb4"/>
<rect x="1386" y="793" width="1" height="177" fill="#8e9eb4"/>
<rect x="1561" y="793" width="1" height="177" fill="#8e9eb4"/>
<rect x="1676" y="793" width="1" height="177" fill="#8e9eb4"/>
<rect x="1791" y="793" width="1" height="177" fill="#8e9eb4"/>
<rect x="1907" y="793" width="1" height="177" fill="#8e9eb4"/>
<rect x="564" y="813" width="1" height="157" fill="#8e9eb4"/>
<rect x="1124" y="813" width="1" height="157" fill="#8e9eb4"/>
<path d="M139 826h10v1h-10zM139 827h1v1h-1zM148 827h1v1h-1zM137 828h3v1h-3zM148 828h1v1h-1zM137 829h1v1h-1zM148 829h1v1h-1zM137 830h1v1h-1zM148 830h1v1h-1zM137 831h1v1h-1zM139 831h8v1h-8zM148 831h1v1h-1zM137 832h1v1h-1zM148 832h1v1h-1zM137 833h1v1h-1zM139 833h8v1h-8zM148 833h1v1h-1zM137 834h1v1h-1zM148 834h1v1h-1zM137 835h1v1h-1zM139 835h8v1h-8zM148 835h1v1h-1zM137 836h1v1h-1zM148 836h1v1h-1zM137 837h1v1h-1zM148 837h1v1h-1zM137 838h1v1h-1zM148 838h1v1h-1zM137 839h12v1h-12z" fill="#c9ced7"/>
<rect x="234" y="821" width="100" height="24" fill="#667384"/>
<rect x="236" y="823" width="96" height="20" fill="#181b1f"/>
<path d="M255 826h13v1h-13zM255 827h1v1h-1zM259 827h1v1h-1zM264 827h1v1h-1zM267 827h2v1h-2zM255 828h1v1h-1zM259 828h1v1h-1zM264 828h1v1h-1zM268 828h1v1h-1zM255 829h1v1h-1zM259 829h6v1h-6zM268 829h1v1h-1zM255 830h1v1h-1zM268 830h1v1h-1zM255 831h1v1h-1zM268 831h1v1h-1zM255 832h1v1h-1zM257 832h10v1h-10zM268 832h1v1h-1zM255 833h1v1h-1zM257 833h1v1h-1zM266 833h1v1h-1zM268 833h1v1h-1zM255 834h1v1h-1zM257 834h1v1h-1zM259 834h6v1h-6zM266 834h1v1h-1zM268 834h1v1h-1zM255 835h1v1h-1zM257 835h1v1h-1zM266 835h1v1h-1zM268 835h1v1h-1zM255 836h1v1h-1zM257 836h1v1h-1zM266 836h1v1h-1zM268 836h1v1h-1zM255 837h1v1h-1zM257 837h10v1h-10zM268 837h1v1h-1zM255 838h1v1h-1zM268 838h1v1h-1zM255 839h14v1h-14z" fill="#c9ced7"/>
<rect x="349" y="821" width="100" height="24" fill="#667384"/>
<rect x="350" y="822" width="98" height="22" fill="#181b1f"/>
<path d="M376 827h1v1h-1zM378 827h1v1h-1zM376 828h1v1h-1zM378 828h1v1h-1zM375 829h2v1h-2zM378 829h2v1h-2zM375 830h2v1h-2zM378 830h2v1h-2zM374 831h1v1h-1zM376 831h1v1h-1zM378 831h3v1h-3zM374 832h1v1h-1zM376 832h1v1h-1zM378 832h3v1h-3zM373 833h1v1h-1zM376 833h1v1h-1zM378 833h4v1h-4zM373 834h1v1h-1zM376 834h1v1h-1zM378 834h4v1h-4zM372 835h1v1h-1zM376 835h1v1h-1zM378 835h5v1h-5zM372 836h1v1h-1zM376 836h1v1h-1zM378 836h5v1h-5zM371 837h1v1h-1zM376 837h1v1h-1zM378 837h6v1h-6zM371 838h6v1h-6zM378 838h6v1h-6z" fill="#c9ced7"/>
<path d="M466 826h15v15h-15zM467 827v13h13v-13z" fill="#667384" fill-rule="evenodd"/>
<path d="M574 826h15v15h-15zM575 827v13h13v-13z" fill="#667384" fill-rule="evenodd"/>
<rect x="576" y="828" width="11" height="11" fill="#c5cad3"/>
<rect x="679" y="828" width="100" height="10" fill="#667384"/>
<rect x="680" y="829" width="98" height="8" fill="#181b1f"/>
<rect x="714" y="830" width="10" height="6" fill="#ac3c3c"/>
<rect x="794" y="828" width="100" height="10" fill="#667384"/>
<rect x="795" y="829" width="98" height="8" fill="#181b1f"/>
<rect x="795" y="830" width="39" height="6" fill="#ac3c3c"/>
<rect x="909" y="828" width="100" height="10" fill="#667384"/>
<rect x="910" y="829" width="98" height="8" fill="#292c33"/>
<path d="M909 828h59v10h-59zM910 829v8h57v-8z" fill="#dfe3e6" fill-rule="evenodd"/>
<rect x="967" y="829" width="1" height="8" fill="#292c33"/>
<rect x="911" y="830" width="56" height="6" fill="#ac3c3c"/>
<rect x="1024" y="821" width="92" height="24" fill="#667384"/>
<rect x="1025" y="822" width="90" height="22" fill="#181b1f"/>
<rect x="1027" y="824" width="42" height="18" fill="#ac3c3c"/>
<path d="M1030 827h12v1h-12zM1030 828h1v1h-1zM1041 828h1v1h-1zM1030 829h1v1h-1zM1041 829h1v1h-1zM1030 830h1v1h-1zM1041 830h1v1h-1zM1030 831h5v1h-5zM1041 831h1v1h-1zM1030 832h5v1h-5zM1041 832h1v1h-1zM1030 833h5v1h-5zM1041 833h1v1h-1zM1030 834h5v1h-5zM1041 834h1v1h-1zM1030 835h1v1h-1zM1041 835h1v1h-1zM1030 836h1v1h-1zM1041 836h1v1h-1zM1030 837h1v1h-1zM1041 837h1v1h-1zM1030 838h12v1h-12z" fill="#e0e0e0"/>
<rect x="1132" y="821" width="92" height="24" fill="#181b1f"/>
<rect x="1133" y="822" width="90" height="22" fill="#181b1f"/>
<rect x="1179" y="824" width="42" height="18" fill="#ac3c3c"/>
<path d="M1185 827h12v1h-12zM1185 828h1v1h-1zM1196 828h1v1h-1zM1185 829h1v1h-1zM1196 829h1v1h-1zM1185 830h1v1h-1zM1196 830h1v1h-1zM1185 831h1v1h-1zM1192 831h5v1h-5zM1185 832h1v1h-1zM1192 832h5v1h-5zM1185 833h1v1h-1zM1192 833h5v1h-5zM1185 834h1v1h-1zM1192 834h5v1h-5zM1185 835h1v1h-1zM1196 835h1v1h-1zM1185 836h1v1h-1zM1196 836h1v1h-1zM1185 837h1v1h-1zM1196 837h1v1h-1zM1185 838h12v1h-12z" fill="#e0e0e0"/>
<rect x="1239" y="821" width="106" height="24" fill="#667384"/>
<rect x="1240" y="822" width="104" height="22" fill="#181b1f"/>
<path d="M1261 826h1v1h-1zM1261 827h1v1h-1zM1258 828h2v1h-2zM1261 828h1v1h-1zM1263 828h1v1h-1zM1257 829h1v1h-1zM1259 829h1v1h-1zM1261 829h1v1h-1zM1263 829h2v1h-2zM1256 830h1v1h-1zM1259 830h1v1h-1zM1261 830h1v1h-1zM1263 830h3v1h-3zM1255 831h1v1h-1zM1259 831h1v1h-1zM1261 831h1v1h-1zM1263 831h4v1h-4zM1254 832h1v1h-1zM1259 832h1v1h-1zM1261 832h1v1h-1zM1263 832h5v1h-5zM1254 833h1v1h-1zM1259 833h1v1h-1zM1261 833h1v1h-1zM1263 833h5v1h-5zM1255 834h1v1h-1zM1259 834h1v1h-1zM1261 834h1v1h-1zM1263 834h4v1h-4zM1256 835h1v1h-1zM1259 835h1v1h-1zM1261 835h1v1h-1zM1263 835h3v1h-3zM1257 836h1v1h-1zM1259 836h1v1h-1zM1261 836h1v1h-1zM1263 836h2v1h-2zM1258 837h2v1h-2zM1261 837h1v1h-1zM1263 837h1v1h-1zM1261 838h1v1h-1zM1261 839h1v1h-1z" fill="#c9ced7"/>
<rect x="1347" y="821" width="32" height="24" fill="#667384"/>
<rect x="1348" y="822" width="30" height="22" fill="#181b1f"/>
<rect x="1394" y="821" width="160" height="24" fill="#667384"/>
<rect x="1395" y="822" width="158" height="22" fill="#181b1f"/>
<path d="M1432 826h2v1h-2zM1431 827h1v1h-1zM1434 827h1v1h-1zM1430 828h1v1h-1zM1435 828h1v1h-1zM1429 829h1v1h-1zM1436 829h1v1h-1zM1428 830h1v1h-1zM1437 830h1v1h-1zM1428 831h10v1h-10zM1426 833h14v1h-14zM1428 835h10v1h-10zM1429 836h8v1h-8zM1430 837h6v1h-6zM1431 838h4v1h-4zM1432 839h2v1h-2z" fill="#c9ced7"/>
<path d="M1536 830h12v1h-12zM1537 831h10v1h-10zM1538 832h8v1h-8zM1539 833h6v1h-6zM1540 834h4v1h-4zM1541 835h2v1h-2z" fill="#c9ced7"/>
<rect x="1569" y="821" width="100" height="24" fill="#667384"/>
<rect x="1570" y="822" width="98" height="22" fill="#292c33"/>
<rect x="1684" y="821" width="100" height="24" fill="#667384"/>
<rect x="1685" y="822" width="98" height="22" fill="#292c33"/>
<rect x="1799" y="821" width="24" height="24" fill="#667384"/>
<rect x="1801" y="823" width="20" height="20" fill="#181b1f"/>
<path d="M1812 828h1v1h-1zM1811 829h2v1h-2zM1810 830h3v1h-3zM1809 831h4v1h-4zM1808 832h5v1h-5zM1807 833h6v1h-6zM1808 834h5v1h-5zM1809 835h4v1h-4zM1810 836h3v1h-3zM1811 837h2v1h-2zM1812 838h1v1h-1z" fill="#c9ced7"/>
<rect x="1825" y="821" width="49" height="24" fill="#667384"/>
<rect x="1826" y="822" width="47" height="22" fill="#292c33"/>
<rect x="1876" y="821" width="24" height="24" fill="#667384"/>
<rect x="1878" y="823" width="20" height="20" fill="#181b1f"/>
<path d="M1886 828h1v1h-1zM1886 829h2v1h-2zM1886 830h3v1h-3zM1886 831h4v1h-4zM1886 832h5v1h-5zM1886 833h6v1h-6zM1886 834h5v1h-5zM1886 835h4v1h-4zM1886 836h3v1h-3zM1886 837h2v1h-2zM1886 838h1v1h-1z" fill="#c9ced7"/>
<path d="M139 865h10v1h-10zM139 866h1v1h-1zM148 866h1v1h-1zM137 867h3v1h-3zM148 867h1v1h-1zM137 868h1v1h-1zM148 868h1v1h-1zM137 869h1v1h-1zM148 869h1v1h-1zM137 870h1v1h-1zM139 870h8v1h-8zM148 870h1v1h-1zM137 871h1v1h-1zM148 871h1v1h-1zM137 872h1v1h-1zM139 872h8v1h-8zM148 872h1v1h-1zM137 873h1v1h-1zM148 873h1v1h-1zM137 874h1v1h-1zM139 874h8v1h-8zM148 874h1v1h-1zM137 875h1v1h-1zM148 875h1v1h-1zM137 876h1v1h-1zM148 876h1v1h-1zM137 877h1v1h-1zM148 877h1v1h-1zM137 878h12v1h-12z" fill="#a6b6ba"/>
<rect x="234" y="860" width="100" height="24" fill="#d8dee2"/>
<rect x="236" y="862" width="96" height="20" fill="#aab0b0"/>
<path d="M255 865h13v1h-13zM255 866h1v1h-1zM259 866h1v1h-1zM264 866h1v1h-1zM267 866h2v1h-2zM255 867h1v1h-1zM259 867h1v1h-1zM264 867h1v1h-1zM268 867h1v1h-1zM255 868h1v1h-1zM259 868h6v1h-6zM268 868h1v1h-1zM255 869h1v1h-1zM268 869h1v1h-1zM255 870h1v1h-1zM268 870h1v1h-1zM255 871h1v1h-1zM257 871h10v1h-10zM268 871h1v1h-1zM255 872h1v1h-1zM257 872h1v1h-1zM266 872h1v1h-1zM268 872h1v1h-1zM255 873h1v1h-1zM257 873h1v1h-1zM259 873h6v1h-6zM266 873h1v1h-1zM268 873h1v1h-1zM255 874h1v1h-1zM257 874h1v1h-1zM266 874h1v1h-1zM268 874h1v1h-1zM255 875h1v1h-1zM257 875h1v1h-1zM266 875h1v1h-1zM268 875h1v1h-1zM255 876h1v1h-1zM257 876h10v1h-10zM268 876h1v1h-1zM255 877h1v1h-1zM268 877h1v1h-1zM255 878h14v1h-14z" fill="#000000"/>
<rect x="349" y="860" width="100" height="24" fill="#d8dee2"/>
<rect x="350" y="861" width="98" height="22" fill="#aab0b0"/>
<path d="M376 866h1v1h-1zM378 866h1v1h-1zM376 867h1v1h-1zM378 867h1v1h-1zM375 868h2v1h-2zM378 868h2v1h-2zM375 869h2v1h-2zM378 869h2v1h-2zM374 870h1v1h-1zM376 870h1v1h-1zM378 870h3v1h-3zM374 871h1v1h-1zM376 871h1v1h-1zM378 871h3v1h-3zM373 872h1v1h-1zM376 872h1v1h-1zM378 872h4v1h-4zM373 873h1v1h-1zM376 873h1v1h-1zM378 873h4v1h-4zM372 874h1v1h-1zM376 874h1v1h-1zM378 874h5v1h-5zM372 875h1v1h-1zM376 875h1v1h-1zM378 875h5v1h-5zM371 876h1v1h-1zM376 876h1v1h-1zM378 876h6v1h-6zM371 877h6v1h-6zM378 877h6v1h-6z" fill="#000000"/>
<path d="M466 865h15v15h-15zM467 866v13h13v-13z" fill="#d8dee2" fill-rule="evenodd"/>
<path d="M574 865h15v15h-15zM575 866v13h13v-13z" fill="#d8dee2" fill-rule="evenodd"/>
<rect x="576" y="867" width="11" height="11" fill="#000000"/>
<rect x="679" y="867" width="100" height="10" fill="#d8dee2"/>
<rect x="680" y="868" width="98" height="8" fill="#181b1f"/>
<rect x="714" y="869" width="10" height="6" fill="#b0a19f"/>
<rect x="794" y="867" width="100" height="10" fill="#d8dee2"/>
<rect x="795" y="868" width="98" height="8" fill="#181b1f"/>
<rect x="795" y="869" width="39" height="6" fill="#b0a19f"/>
<rect x="909" y="867" width="100" height="10" fill="#667384"/>
<rect x="910" y="868" width="98" height="8" fill="#292c33"/>
<path d="M909 867h59v10h-59zM910 868v8h57v-8z" fill="#dfe3e6" fill-rule="evenodd"/>
<rect x="967" y="868" width="1" height="8" fill="#292c33"/>
<rect x="911" y="869" width="56" height="6" fill="#ac3c3c"/>
<rect x="1024" y="860" width="92" height="24" fill="#d8dee2"/>
<rect x="1025" y="861" width="90" height="22" fill="#181b1f"/>
<rect x="1027" y="863" width="42" height="18" fill="#aab0b0"/>
<path d="M1030 866h12v1h-12zM1030 867h1v1h-1zM1041 867h1v1h-1zM1030 868h1v1h-1zM1041 868h1v1h-1zM1030 869h1v1h-1zM1041 869h1v1h-1zM1030 870h5v1h-5zM1041 870h1v1h-1zM1030 871h5v1h-5zM1041 871h1v1h-1zM1030 872h5v1h-5zM1041 872h1v1h-1zM1030 873h5v1h-5zM1041 873h1v1h-1zM1030 874h1v1h-1zM1041 874h1v1h-1zM1030 875h1v1h-1zM1041 875h1v1h-1zM1030 876h1v1h-1zM1041 876h1v1h-1zM1030 877h12v1h-12z" fill="#000000"/>
<rect x="1132" y="860" width="92" height="24" fill="#d8dee2"/>
<rect x="1133" y="861" width="90" height="22" fill="#181b1f"/>
<rect x="1179" y="863" width="42" height="18" fill="#aab0b0"/>
<path d="M1185 866h12v1h-12zM1185 867h1v1h-1zM1196 867h1v1h-1zM1185 868h1v1h-1zM1196 868h1v1h-1zM1185 869h1v1h-1zM1196 869h1v1h-1zM1185 870h1v1h-1zM1192 870h5v1h-5zM1185 871h1v1h-1zM1192 871h5v1h-5zM1185 872h1v1h-1zM1192 872h5v1h-5zM1185 873h1v1h-1zM1192 873h5v1h-5zM1185 874h1v1h-1zM1196 874h1v1h-1zM1185 875h1v1h-1zM1196 875h1v1h-1zM1185 876h1v1h-1zM1196 876h1v1h-1zM1185 877h12v1h-12z" fill="#000000"/>
<rect x="1239" y="860" width="106" height="24" fill="#d8dee2"/>
<rect x="1240" y="861" width="104" height="22" fill="#aab0b0"/>
<path d="M1261 865h1v1h-1zM1261 866h1v1h-1zM1258 867h2v1h-2zM1261 867h1v1h-1zM1263 867h1v1h-1zM1257 868h1v1h-1zM1259 868h1v1h-1zM1261 868h1v1h-1zM1263 868h2v1h-2zM1256 869h1v1h-1zM1259 869h1v1h-1zM1261 869h1v1h-1zM1263 869h3v1h-3zM1255 870h1v1h-1zM1259 870h1v1h-1zM1261 870h1v1h-1zM1263 870h4v1h-4zM1254 871h1v1h-1zM1259 871h1v1h-1zM1261 871h1v1h-1zM1263 871h5v1h-5zM1254 872h1v1h-1zM1259 872h1v1h-1zM1261 872h1v1h-1zM1263 872h5v1h-5zM1255 873h1v1h-1zM1259 873h1v1h-1zM1261 873h1v1h-1zM1263 873h4v1h-4zM1256 874h1v1h-1zM1259 874h1v1h-1zM1261 874h1v1h-1zM1263 874h3v1h-3zM1257 875h1v1h-1zM1259 875h1v1h-1zM1261 875h1v1h-1zM1263 875h2v1h-2zM1258 876h2v1h-2zM1261 876h1v1h-1zM1263 876h1v1h-1zM1261 877h1v1h-1zM1261 878h1v1h-1z" fill="#000000"/>
<rect x="1347" y="860" width="32" height="24" fill="#d8dee2"/>
<rect x="1348" y="861" width="30" height="22" fill="#aab0b0"/>
<rect x="1394" y="860" width="160" height="24" fill="#d8dee2"/>
<rect x="1395" y="861" width="158" height="22" fill="#aab0b0"/>
<path d="M1432 865h2v1h-2zM1431 866h1v1h-1zM1434 866h1v1h-1zM1430 867h1v1h-1zM1435 867h1v1h-1zM1429 868h1v1h-1zM1436 868h1v1h-1zM1428 869h1v1h-1zM1437 869h1v1h-1zM1428 870h10v1h-10zM1426 872h14v1h-14zM1428 874h10v1h-10zM1429 875h8v1h-8zM1430 876h6v1h-6zM1431 877h4v1h-4zM1432 878h2v1h-2z" fill="#000000"/>
<path d="M1536 869h12v1h-12zM1537 870h10v1h-10zM1538 871h8v1h-8zM1539 872h6v1h-6zM1540 873h4v1h-4zM1541 874h2v1h-2z" fill="#000000"/>
<rect x="1569" y="860" width="100" height="24" fill="#d8dee2"/>
<rect x="1570" y="861" width="98" height="22" fill="#292c33"/>
<rect x="1684" y="860" width="100" height="24" fill="#d8dee2"/>
<rect x="1685" y="861" width="98" height="22" fill="#292c33"/>
<rect x="1799" y="860" width="24" height="24" fill="#d8dee2"/>
<rect x="1801" y="862" width="20" height="20" fill="#aab0b0"/>
<path d="M1812 867h1v1h-1zM1811 868h2v1h-2zM1810 869h3v1h-3zM1809 870h4v1h-4zM1808 871h5v1h-5zM1807 872h6v1h-6zM1808 873h5v1h-5zM1809 874h4v1h-4zM1810 875h3v1h-3zM1811 876h2v1h-2zM1812 877h1v1h-1z" fill="#000000"/>
<rect x="1825" y="860" width="49" height="24" fill="#d8dee2"/>
<rect x="1826" y="861" width="47" height="22" fill="#292c33"/>
<rect x="1876" y="860" width="24" height="24" fill="#d8dee2"/>
<rect x="1878" y="862" width="20" height="20" fill="#aab0b0"/>
<path d="M1886 867h1v1h-1zM1886 868h2v1h-2zM1886 869h3v1h-3zM1886 870h4v1h-4zM1886 871h5v1h-5zM1886 872h6v1h-6zM1886 873h5v1h-5zM1886 874h4v1h-4zM1886 875h3v1h-3zM1886 876h2v1h-2zM1886 877h1v1h-1z" fill="#000000"/>
<path d="M139 904h10v1h-10zM139 905h1v1h-1zM148 905h1v1h-1zM137 906h3v1h-3zM148 906h1v1h-1zM137 907h1v1h-1zM148 907h1v1h-1zM137 908h1v1h-1zM148 908h1v1h-1zM137 909h1v1h-1zM139 909h8v1h-8zM148 909h1v1h-1zM137 910h1v1h-1zM148 910h1v1h-1zM137 911h1v1h-1zM139 911h8v1h-8zM148 911h1v1h-1zM137 912h1v1h-1zM148 912h1v1h-1zM137 913h1v1h-1zM139 913h8v1h-8zM148 913h1v1h-1zM137 914h1v1h-1zM148 914h1v1h-1zM137 915h1v1h-1zM148 915h1v1h-1zM137 916h1v1h-1zM148 916h1v1h-1zM137 917h12v1h-12z" fill="#e0e0e0"/>
<rect x="234" y="899" width="100" height="24" fill="#181b1f"/>
<rect x="236" y="901" width="96" height="20" fill="#ac3c3c"/>
<path d="M255 904h13v1h-13zM255 905h1v1h-1zM259 905h1v1h-1zM264 905h1v1h-1zM267 905h2v1h-2zM255 906h1v1h-1zM259 906h1v1h-1zM264 906h1v1h-1zM268 906h1v1h-1zM255 907h1v1h-1zM259 907h6v1h-6zM268 907h1v1h-1zM255 908h1v1h-1zM268 908h1v1h-1zM255 909h1v1h-1zM268 909h1v1h-1zM255 910h1v1h-1zM257 910h10v1h-10zM268 910h1v1h-1zM255 911h1v1h-1zM257 911h1v1h-1zM266 911h1v1h-1zM268 911h1v1h-1zM255 912h1v1h-1zM257 912h1v1h-1zM259 912h6v1h-6zM266 912h1v1h-1zM268 912h1v1h-1zM255 913h1v1h-1zM257 913h1v1h-1zM266 913h1v1h-1zM268 913h1v1h-1zM255 914h1v1h-1zM257 914h1v1h-1zM266 914h1v1h-1zM268 914h1v1h-1zM255 915h1v1h-1zM257 915h10v1h-10zM268 915h1v1h-1zM255 916h1v1h-1zM268 916h1v1h-1zM255 917h14v1h-14z" fill="#e0e0e0"/>
<rect x="349" y="899" width="100" height="24" fill="#181b1f"/>
<rect x="350" y="900" width="98" height="22" fill="#ac3c3c"/>
<path d="M376 905h1v1h-1zM378 905h1v1h-1zM376 906h1v1h-1zM378 906h1v1h-1zM375 907h2v1h-2zM378 907h2v1h-2zM375 908h2v1h-2zM378 908h2v1h-2zM374 909h1v1h-1zM376 909h1v1h-1zM378 909h3v1h-3zM374 910h1v1h-1zM376 910h1v1h-1zM378 910h3v1h-3zM373 911h1v1h-1zM376 911h1v1h-1zM378 911h4v1h-4zM373 912h1v1h-1zM376 912h1v1h-1zM378 912h4v1h-4zM372 913h1v1h-1zM376 913h1v1h-1zM378 913h5v1h-5zM372 914h1v1h-1zM376 914h1v1h-1zM378 914h5v1h-5zM371 915h1v1h-1zM376 915h1v1h-1zM378 915h6v1h-6zM371 916h6v1h-6zM378 916h6v1h-6z" fill="#e0e0e0"/>
<path d="M466 904h15v15h-15zM467 905v13h13v-13z" fill="#a8acb2" fill-rule="evenodd"/>
<path d="M574 904h15v15h-15zM575 905v13h13v-13z" fill="#a8acb2" fill-rule="evenodd"/>
<rect x="576" y="906" width="11" height="11" fill="#e0e0e0"/>
<rect x="679" y="906" width="100" height="10" fill="#d8dee2"/>
<rect x="680" y="907" width="98" height="8" fill="#181b1f"/>
<rect x="714" y="908" width="10" height="6" fill="#e0e0e0"/>
<rect x="794" y="906" width="100" height="10" fill="#d8dee2"/>
<rect x="795" y="907" width="98" height="8" fill="#181b1f"/>
<rect x="795" y="908" width="39" height="6" fill="#e0e0e0"/>
<rect x="909" y="906" width="100" height="10" fill="#667384"/>
<rect x="910" y="907" width="98" height="8" fill="#292c33"/>
<path d="M909 906h59v10h-59zM910 907v8h57v-8z" fill="#dfe3e6" fill-rule="evenodd"/>
<rect x="967" y="907" width="1" height="8" fill="#292c33"/>
<rect x="911" y="908" width="56" height="6" fill="#ac3c3c"/>
<rect x="1024" y="899" width="92" height="24" fill="#181b1f"/>
<rect x="1025" y="900" width="90" height="22" fill="#181b1f"/>
<rect x="1027" y="902" width="42" height="18" fill="#ac3c3c"/>
<path d="M1030 905h12v1h-12zM1030 906h1v1h-1zM1041 906h1v1h-1zM1030 907h1v1h-1zM1041 907h1v1h-1zM1030 908h1v1h-1zM1041 908h1v1h-1zM1030 909h5v1h-5zM1041 909h1v1h-1zM1030 910h5v1h-5zM1041 910h1v1h-1zM1030 911h5v1h-5zM1041 911h1v1h-1zM1030 912h5v1h-5zM1041 912h1v1h-1zM1030 913h1v1h-1zM1041 913h1v1h-1zM1030 914h1v1h-1zM1041 914h1v1h-1zM1030 915h1v1h-1zM1041 915h1v1h-1zM1030 916h12v1h-12z" fill="#e0e0e0"/>
<rect x="1132" y="899" width="92" height="24" fill="#181b1f"/>
<rect x="1133" y="900" width="90" height="22" fill="#181b1f"/>
<rect x="1179" y="902" width="42" height="18" fill="#ac3c3c"/>
<path d="M1185 905h12v1h-12zM1185 906h1v1h-1zM1196 906h1v1h-1zM1185 907h1v1h-1zM1196 907h1v1h-1zM1185 908h1v1h-1zM1196 908h1v1h-1zM1185 909h1v1h-1zM1192 909h5v1h-5zM1185 910h1v1h-1zM1192 910h5v1h-5zM1185 911h1v1h-1zM1192 911h5v1h-5zM1185 912h1v1h-1zM1192 912h5v1h-5zM1185 913h1v1h-1zM1196 913h1v1h-1zM1185 914h1v1h-1zM1196 914h1v1h-1zM1185 915h1v1h-1zM1196 915h1v1h-1zM1185 916h12v1h-12z" fill="#e0e0e0"/>
<rect x="1239" y="899" width="106" height="24" fill="#181b1f"/>
<rect x="1240" y="900" width="104" height="22" fill="#ac3c3c"/>
<path d="M1261 904h1v1h-1zM1261 905h1v1h-1zM1258 906h2v1h-2zM1261 906h1v1h-1zM1263 906h1v1h-1zM1257 907h1v1h-1zM1259 907h1v1h-1zM1261 907h1v1h-1zM1263 907h2v1h-2zM1256 908h1v1h-1zM1259 908h1v1h-1zM1261 908h1v1h-1zM1263 908h3v1h-3zM1255 909h1v1h-1zM1259 909h1v1h-1zM1261 909h1v1h-1zM1263 909h4v1h-4zM1254 910h1v1h-1zM1259 910h1v1h-1zM1261 910h1v1h-1zM1263 910h5v1h-5zM1254 911h1v1h-1zM1259 911h1v1h-1zM1261 911h1v1h-1zM1263 911h5v1h-5zM1255 912h1v1h-1zM1259 912h1v1h-1zM1261 912h1v1h-1zM1263 912h4v1h-4zM1256 913h1v1h-1zM1259 913h1v1h-1zM1261 913h1v1h-1zM1263 913h3v1h-3zM1257 914h1v1h-1zM1259 914h1v1h-1zM1261 914h1v1h-1zM1263 914h2v1h-2zM1258 915h2v1h-2zM1261 915h1v1h-1zM1263 915h1v1h-1zM1261 916h1v1h-1zM1261 917h1v1h-1z" fill="#e0e0e0"/>
<rect x="1347" y="899" width="32" height="24" fill="#181b1f"/>
<rect x="1348" y="900" width="30" height="22" fill="#ac3c3c"/>
<rect x="1394" y="899" width="160" height="24" fill="#181b1f"/>
<rect x="1395" y="900" width="158" height="22" fill="#ac3c3c"/>
<path d="M1432 904h2v1h-2zM1431 905h1v1h-1zM1434 905h1v1h-1zM1430 906h1v1h-1zM1435 906h1v1h-1zM1429 907h1v1h-1zM1436 907h1v1h-1zM1428 908h1v1h-1zM1437 908h1v1h-1zM1428 909h10v1h-10zM1426 911h14v1h-14zM1428 913h10v1h-10zM1429 914h8v1h-8zM1430 915h6v1h-6zM1431 916h4v1h-4zM1432 917h2v1h-2z" fill="#e0e0e0"/>
<path d="M1536 908h12v1h-12zM1537 909h10v1h-10zM1538 910h8v1h-8zM1539 911h6v1h-6zM1540 912h4v1h-4zM1541 913h2v1h-2z" fill="#e0e0e0"/>
<rect x="1569" y="899" width="100" height="24" fill="#181b1f"/>
<rect x="1570" y="900" width="98" height="22" fill="#ac3c3c"/>
<rect x="1684" y="899" width="100" height="24" fill="#181b1f"/>
<rect x="1685" y="900" width="98" height="22" fill="#ac3c3c"/>
<rect x="1799" y="899" width="24" height="24" fill="#181b1f"/>
<rect x="1801" y="901" width="20" height="20" fill="#ac3c3c"/>
<path d="M1812 906h1v1h-1zM1811 907h2v1h-2zM1810 908h3v1h-3zM1809 909h4v1h-4zM1808 910h5v1h-5zM1807 911h6v1h-6zM1808 912h5v1h-5zM1809 913h4v1h-4zM1810 914h3v1h-3zM1811 915h2v1h-2zM1812 916h1v1h-1z" fill="#e0e0e0"/>
<rect x="1825" y="899" width="49" height="24" fill="#181b1f"/>
<rect x="1826" y="900" width="47" height="22" fill="#ac3c3c"/>
<rect x="1876" y="899" width="24" height="24" fill="#181b1f"/>
<rect x="1878" y="901" width="20" height="20" fill="#ac3c3c"/>
<path d="M1886 906h1v1h-1zM1886 907h2v1h-2zM1886 908h3v1h-3zM1886 909h4v1h-4zM1886 910h5v1h-5zM1886 911h6v1h-6zM1886 912h5v1h-5zM1886 913h4v1h-4zM1886 914h3v1h-3zM1886 915h2v1h-2zM1886 916h1v1h-1z" fill="#e0e0e0"/>
<path d="M139 943h10v1h-10zM139 944h1v1h-1zM148 944h1v1h-1zM137 945h3v1h-3zM148 945h1v1h-1zM137 946h1v1h-1zM148 946h1v1h-1zM137 947h1v1h-1zM148 947h1v1h-1zM137 948h1v1h-1zM139 948h8v1h-8zM148 948h1v1h-1zM137 949h1v1h-1zM148 949h1v1h-1zM137 950h1v1h-1zM139 950h8v1h-8zM148 950h1v1h-1zM137 951h1v1h-1zM148 951h1v1h-1zM137 952h1v1h-1zM139 952h8v1h-8zM148 952h1v1h-1zM137 953h1v1h-1zM148 953h1v1h-1zM137 954h1v1h-1zM148 954h1v1h-1zM137 955h1v1h-1zM148 955h1v1h-1zM137 956h12v1h-12z" fill="#4b525b"/>
<rect x="234" y="938" width="100" height="24" fill="#3f4652"/>
<rect x="236" y="940" width="96" height="20" fill="#2f353d"/>
<path d="M255 943h13v1h-13zM255 944h1v1h-1zM259 944h1v1h-1zM264 944h1v1h-1zM267 944h2v1h-2zM255 945h1v1h-1zM259 945h1v1h-1zM264 945h1v1h-1zM268 945h1v1h-1zM255 946h1v1h-1zM259 946h6v1h-6zM268 946h1v1h-1zM255 947h1v1h-1zM268 947h1v1h-1zM255 948h1v1h-1zM268 948h1v1h-1zM255 949h1v1h-1zM257 949h10v1h-10zM268 949h1v1h-1zM255 950h1v1h-1zM257 950h1v1h-1zM266 950h1v1h-1zM268 950h1v1h-1zM255 951h1v1h-1zM257 951h1v1h-1zM259 951h6v1h-6zM266 951h1v1h-1zM268 951h1v1h-1zM255 952h1v1h-1zM257 952h1v1h-1zM266 952h1v1h-1zM268 952h1v1h-1zM255 953h1v1h-1zM257 953h1v1h-1zM266 953h1v1h-1zM268 953h1v1h-1zM255 954h1v1h-1zM257 954h10v1h-10zM268 954h1v1h-1zM255 955h1v1h-1zM268 955h1v1h-1zM255 956h14v1h-14z" fill="#4b525b"/>
<rect x="349" y="938" width="100" height="24" fill="#3f4652"/>
<rect x="350" y="939" width="98" height="22" fill="#2f353d"/>
<path d="M376 944h1v1h-1zM378 944h1v1h-1zM376 945h1v1h-1zM378 945h1v1h-1zM375 946h2v1h-2zM378 946h2v1h-2zM375 947h2v1h-2zM378 947h2v1h-2zM374 948h1v1h-1zM376 948h1v1h-1zM378 948h3v1h-3zM374 949h1v1h-1zM376 949h1v1h-1zM378 949h3v1h-3zM373 950h1v1h-1zM376 950h1v1h-1zM378 950h4v1h-4zM373 951h1v1h-1zM376 951h1v1h-1zM378 951h4v1h-4zM372 952h1v1h-1zM376 952h1v1h-1zM378 952h5v1h-5zM372 953h1v1h-1zM376 953h1v1h-1zM378 953h5v1h-5zM371 954h1v1h-1zM376 954h1v1h-1zM378 954h6v1h-6zM371 955h6v1h-6zM378 955h6v1h-6z" fill="#4b525b"/>
<path d="M466 943h15v15h-15zM467 944v13h13v-13z" fill="#3f4652" fill-rule="evenodd"/>
<path d="M574 943h15v15h-15zM575 944v13h13v-13z" fill="#3f4652" fill-rule="evenodd"/>
<rect x="576" y="945" width="11" height="11" fill="#4b525b"/>
<rect x="679" y="945" width="100" height="10" fill="#3f4652"/>
<rect x="680" y="946" width="98" height="8" fill="#2f353d"/>
<rect x="714" y="947" width="10" height="6" fill="#4b525b"/>
<rect x="794" y="945" width="100" height="10" fill="#3f4652"/>
<rect x="795" y="946" width="98" height="8" fill="#2f353d"/>
<rect x="795" y="947" width="39" height="6" fill="#4b525b"/>
<rect x="909" y="945" width="100" height="10" fill="#3f4652"/>
<rect x="910" y="946" width="98" height="8" fill="#292c33"/>
<rect x="1024" y="938" width="92" height="24" fill="#3f4652"/>
<rect x="1025" y="939" width="90" height="22" fill="#1b1e23"/>
<path d="M1030 944h12v1h-12zM1030 945h1v1h-1zM1041 945h1v1h-1zM1030 946h1v1h-1zM1041 946h1v1h-1zM1030 947h1v1h-1zM1041 947h1v1h-1zM1030 948h5v1h-5zM1041 948h1v1h-1zM1030 949h5v1h-5zM1041 949h1v1h-1zM1030 950h5v1h-5zM1041 950h1v1h-1zM1030 951h5v1h-5zM1041 951h1v1h-1zM1030 952h1v1h-1zM1041 952h1v1h-1zM1030 953h1v1h-1zM1041 953h1v1h-1zM1030 954h1v1h-1zM1041 954h1v1h-1zM1030 955h12v1h-12z" fill="#4b525b"/>
<rect x="1132" y="938" width="92" height="24" fill="#3f4652"/>
<rect x="1133" y="939" width="90" height="22" fill="#1b1e23"/>
<path d="M1185 944h12v1h-12zM1185 945h1v1h-1zM1196 945h1v1h-1zM1185 946h1v1h-1zM1196 946h1v1h-1zM1185 947h1v1h-1zM1196 947h1v1h-1zM1185 948h1v1h-1zM1192 948h5v1h-5zM1185 949h1v1h-1zM1192 949h5v1h-5zM1185 950h1v1h-1zM1192 950h5v1h-5zM1185 951h1v1h-1zM1192 951h5v1h-5zM1185 952h1v1h-1zM1196 952h1v1h-1zM1185 953h1v1h-1zM1196 953h1v1h-1zM1185 954h1v1h-1zM1196 954h1v1h-1zM1185 955h12v1h-12z" fill="#4b525b"/>
<rect x="1239" y="938" width="106" height="24" fill="#3f4652"/>
<rect x="1240" y="939" width="104" height="22" fill="#2f353d"/>
<path d="M1261 943h1v1h-1zM1261 944h1v1h-1zM1258 945h2v1h-2zM1261 945h1v1h-1zM1263 945h1v1h-1zM1257 946h1v1h-1zM1259 946h1v1h-1zM1261 946h1v1h-1zM1263 946h2v1h-2zM1256 947h1v1h-1zM1259 947h1v1h-1zM1261 947h1v1h-1zM1263 947h3v1h-3zM1255 948h1v1h-1zM1259 948h1v1h-1zM1261 948h1v1h-1zM1263 948h4v1h-4zM1254 949h1v1h-1zM1259 949h1v1h-1zM1261 949h1v1h-1zM1263 949h5v1h-5zM1254 950h1v1h-1zM1259 950h1v1h-1zM1261 950h1v1h-1zM1263 950h5v1h-5zM1255 951h1v1h-1zM1259 951h1v1h-1zM1261 951h1v1h-1zM1263 951h4v1h-4zM1256 952h1v1h-1zM1259 952h1v1h-1zM1261 952h1v1h-1zM1263 952h3v1h-3zM1257 953h1v1h-1zM1259 953h1v1h-1zM1261 953h1v1h-1zM1263 953h2v1h-2zM1258 954h2v1h-2zM1261 954h1v1h-1zM1263 954h1v1h-1zM1261 955h1v1h-1zM1261 956h1v1h-1z" fill="#4b525b"/>
<rect x="1347" y="938" width="32" height="24" fill="#3f4652"/>
<rect x="1348" y="939" width="30" height="22" fill="#2f353d"/>
<rect x="1394" y="938" width="160" height="24" fill="#3f4652"/>
<rect x="1395" y="939" width="158" height="22" fill="#2f353d"/>
<path d="M1432 943h2v1h-2zM1431 944h1v1h-1zM1434 944h1v1h-1zM1430 945h1v1h-1zM1435 945h1v1h-1zM1429 946h1v1h-1zM1436 946h1v1h-1zM1428 947h1v1h-1zM1437 947h1v1h-1zM1428 948h10v1h-10zM1426 950h14v1h-14zM1428 952h10v1h-10zM1429 953h8v1h-8zM1430 954h6v1h-6zM1431 955h4v1h-4zM1432 956h2v1h-2z" fill="#4b525b"/>
<path d="M1536 947h12v1h-12zM1537 948h10v1h-10zM1538 949h8v1h-8zM1539 950h6v1h-6zM1540 951h4v1h-4zM1541 952h2v1h-2z" fill="#4b525b"/>
<rect x="1569" y="938" width="100" height="24" fill="#3f4652"/>
<rect x="1570" y="939" width="98" height="22" fill="#2f353d"/>
<rect x="1684" y="938" width="100" height="24" fill="#3f4652"/>
<rect x="1685" y="939" width="98" height="22" fill="#2f353d"/>
<rect x="1799" y="938" width="24" height="24" fill="#3f4652"/>
<rect x="1801" y="940" width="20" height="20" fill="#2f353d"/>
<path d="M1812 945h1v1h-1zM1811 946h2v1h-2zM1810 947h3v1h-3zM1809 948h4v1h-4zM1808 949h5v1h-5zM1807 950h6v1h-6zM1808 951h5v1h-5zM1809 952h4v1h-4zM1810 953h3v1h-3zM1811 954h2v1h-2zM1812 955h1v1h-1z" fill="#4b525b"/>
<rect x="1825" y="938" width="49" height="24" fill="#3f4652"/>
<rect x="1826" y="939" width="47" height="22" fill="#2f353d"/>
<rect x="1876" y="938" width="24" height="24" fill="#3f4652"/>
<rect x="1878" y="940" width="20" height="20" fill="#2f353d"/>
<path d="M1886 945h1v1h-1zM1886 946h2v1h-2zM1886 947h3v1h-3zM1886 948h4v1h-4zM1886 949h5v1h-5zM1886 950h6v1h-6zM1886 951h5v1h-5zM1886 952h4v1h-4zM1886 953h3v1h-3zM1886 954h2v1h-2zM1886 955h1v1h-1z" fill="#4b525b"/>
<!-- status bar -->
<rect x="0" y="982" width="1920" height="12" fill="#667384"/>
<rect x="1" y="983" width="1918" height="10" fill="#181b1f"/>
<rect x="0" y="993" width="170" height="24" fill="#667384"/>
<rect x="1" y="994" width="168" height="22" fill="#181b1f"/>
<rect x="169" y="993" width="150" height="24" fill="#667384"/>
<rect x="170" y="994" width="148" height="22" fill="#292c33"/>
<rect x="318" y="993" width="190" height="24" fill="#667384"/>
<rect x="319" y="994" width="188" height="22" fill="#181b1f"/>
<rect x="507" y="993" width="517" height="24" fill="#667384"/>
<rect x="508" y="994" width="515" height="22" fill="#181b1f"/>
<rect x="1023" y="993" width="320" height="24" fill="#667384"/>
<rect x="1024" y="994" width="318" height="22" fill="#181b1f"/>
<rect x="1342" y="993" width="160" height="24" fill="#667384"/>
<rect x="1343" y="994" width="158" height="22" fill="#181b1f"/>
<rect x="1501" y="993" width="180" height="24" fill="#667384"/>
<rect x="1502" y="994" width="178" height="22" fill="#181b1f"/>
<rect x="1680" y="993" width="240" height="24" fill="#667384"/>
<rect x="1681" y="994" width="238" height="22" fill="#181b1f"/>
</svg>
<svg id="labels" width="1920" height="1017" viewBox="0 0 1920 1017">
<text x="170" y="25" fill="#c9ced7" textLength="38" lengthAdjust="spacingAndGlyphs">State:</text>
<text x="250" y="25" fill="#c9ced7" textLength="44" lengthAdjust="spacingAndGlyphs">NORMAL</text>
<text x="1608" y="25" fill="#c9ced7" textLength="38" lengthAdjust="spacingAndGlyphs">Style:</text>
<text x="1692" y="25" fill="#c9ced7" textLength="47" lengthAdjust="spacingAndGlyphs" text-anchor="middle">Genesis</text>
<text x="1753.5" y="25" fill="#c9ced7" textLength="34" lengthAdjust="spacingAndGlyphs" text-anchor="middle">15/15</text>
<text x="85.5" y="74" fill="#c9ced7" textLength="32" lengthAdjust="spacingAndGlyphs" text-anchor="middle">Light</text>
<text x="85.5" y="104" fill="#c9ced7" textLength="39" lengthAdjust="spacingAndGlyphs" text-anchor="middle">Jungle</text>
<text x="85.5" y="134" fill="#c9ced7" textLength="35" lengthAdjust="spacingAndGlyphs" text-anchor="middle">Candy</text>
<text x="85.5" y="164" fill="#c9ced7" textLength="49" lengthAdjust="spacingAndGlyphs" text-anchor="middle">Lavanda</text>
<text x="85.5" y="194" fill="#c9ced7" textLength="35" lengthAdjust="spacingAndGlyphs" text-anchor="middle">Cyber</text>
<text x="85.5" y="224" fill="#c9ced7" textLength="53" lengthAdjust="spacingAndGlyphs" text-anchor="middle">Terminal</text>
<text x="85.5" y="254" fill="#c9ced7" textLength="35" lengthAdjust="spacingAndGlyphs" text-anchor="middle">Ashes</text>
<text x="85.5" y="284" fill="#c9ced7" textLength="37" lengthAdjust="spacingAndGlyphs" text-anchor="middle">Bluish</text>
<text x="85.5" y="314" fill="#c9ced7" textLength="28" lengthAdjust="spacingAndGlyphs" text-anchor="middle">Dark</text>
<text x="85.5" y="344" fill="#c9ced7" textLength="42" lengthAdjust="spacingAndGlyphs" text-anchor="middle">Cherry</text>
<text x="85.5" y="374" fill="#c9ced7" textLength="35" lengthAdjust="spacingAndGlyphs" text-anchor="middle">Sunny</text>
<text x="85.5" y="404" fill="#c9ced7" textLength="48" lengthAdjust="spacingAndGlyphs" text-anchor="middle">Enefete</text>
<text x="85.5" y="434" fill="#c9ced7" textLength="37" lengthAdjust="spacingAndGlyphs" text-anchor="middle">Amber</text>
<text x="85.5" y="464" fill="#c9ced7" textLength="42" lengthAdjust="spacingAndGlyphs" text-anchor="middle">RLTech</text>
<text x="85.5" y="494" fill="#e0e0e0" textLength="47" lengthAdjust="spacingAndGlyphs" text-anchor="middle">Genesis</text>
<text x="243.5" y="74" fill="#c9ced7" textLength="49" lengthAdjust="spacingAndGlyphs" text-anchor="middle">DEFAULT</text>
<text x="243.5" y="104" fill="#c9ced7" textLength="35" lengthAdjust="spacingAndGlyphs" text-anchor="middle">LABEL</text>
<text x="243.5" y="134" fill="#e0e0e0" textLength="42" lengthAdjust="spacingAndGlyphs" text-anchor="middle">BUTTON</text>
<text x="243.5" y="164" fill="#c9ced7" textLength="42" lengthAdjust="spacingAndGlyphs" text-anchor="middle">TOGGLE</text>
<text x="243.5" y="194" fill="#c9ced7" textLength="39" lengthAdjust="spacingAndGlyphs" text-anchor="middle">SLIDER</text>
<text x="243.5" y="224" fill="#c9ced7" textLength="77" lengthAdjust="spacingAndGlyphs" text-anchor="middle">PROGRESSBAR</text>
<text x="243.5" y="254" fill="#c9ced7" textLength="56" lengthAdjust="spacingAndGlyphs" text-anchor="middle">CHECKBOX</text>
<text x="243.5" y="284" fill="#c9ced7" textLength="58" lengthAdjust="spacingAndGlyphs" text-anchor="middle">COMBOBOX</text>
<text x="243.5" y="314" fill="#c9ced7" textLength="79" lengthAdjust="spacingAndGlyphs" text-anchor="middle">DROPDOWNBOX</text>
<text x="243.5" y="344" fill="#c9ced7" textLength="49" lengthAdjust="spacingAndGlyphs" text-anchor="middle">TEXTBOX</text>
<text x="243.5" y="374" fill="#c9ced7" textLength="56" lengthAdjust="spacingAndGlyphs" text-anchor="middle">VALUEBOX</text>
<text x="243.5" y="404" fill="#c9ced7" textLength="63" lengthAdjust="spacingAndGlyphs" text-anchor="middle">CONTROL11</text>
<text x="243.5" y="434" fill="#c9ced7" textLength="52" lengthAdjust="spacingAndGlyphs" text-anchor="middle">LISTVIEW</text>
<text x="243.5" y="464" fill="#c9ced7" textLength="74" lengthAdjust="spacingAndGlyphs" text-anchor="middle">COLORPICKER</text>
<text x="243.5" y="494" fill="#c9ced7" textLength="63" lengthAdjust="spacingAndGlyphs" text-anchor="middle">SCROLLBAR</text>
<text x="243.5" y="524" fill="#c9ced7" textLength="63" lengthAdjust="spacingAndGlyphs" text-anchor="middle">STATUSBAR</text>
<text x="412.5" y="74" fill="#c9ced7" textLength="131" lengthAdjust="spacingAndGlyphs" text-anchor="middle">BORDER_COLOR_NORMAL</text>
<text x="412.5" y="104" fill="#c9ced7" textLength="117" lengthAdjust="spacingAndGlyphs" text-anchor="middle">BASE_COLOR_NORMAL</text>
<text x="412.5" y="134" fill="#c9ced7" textLength="117" lengthAdjust="spacingAndGlyphs" text-anchor="middle">TEXT_COLOR_NORMAL</text>
<text x="412.5" y="164" fill="#c9ced7" textLength="136" lengthAdjust="spacingAndGlyphs" text-anchor="middle">BORDER_COLOR_FOCUSED</text>
<text x="412.5" y="194" fill="#c9ced7" textLength="122" lengthAdjust="spacingAndGlyphs" text-anchor="middle">BASE_COLOR_FOCUSED</text>
<text x="412.5" y="224" fill="#c9ced7" textLength="122" lengthAdjust="spacingAndGlyphs" text-anchor="middle">TEXT_COLOR_FOCUSED</text>
<text x="412.5" y="254" fill="#c9ced7" textLength="136" lengthAdjust="spacingAndGlyphs" text-anchor="middle">BORDER_COLOR_PRESSED</text>
<text x="412.5" y="284" fill="#e0e0e0" textLength="122" lengthAdjust="spacingAndGlyphs" text-anchor="middle">BASE_COLOR_PRESSED</text>
<text x="412.5" y="314" fill="#c9ced7" textLength="122" lengthAdjust="spacingAndGlyphs" text-anchor="middle">TEXT_COLOR_PRESSED</text>
<text x="412.5" y="344" fill="#c9ced7" textLength="140" lengthAdjust="spacingAndGlyphs" text-anchor="middle">BORDER_COLOR_DISABLED</text>
<text x="412.5" y="374" fill="#c9ced7" textLength="126" lengthAdjust="spacingAndGlyphs" text-anchor="middle">BASE_COLOR_DISABLED</text>
<text x="412.5" y="404" fill="#c9ced7" textLength="126" lengthAdjust="spacingAndGlyphs" text-anchor="middle">TEXT_COLOR_DISABLED</text>
<text x="412.5" y="434" fill="#c9ced7" textLength="81" lengthAdjust="spacingAndGlyphs" text-anchor="middle">BORDER_WIDTH</text>
<text x="412.5" y="464" fill="#c9ced7" textLength="79" lengthAdjust="spacingAndGlyphs" text-anchor="middle">TEXT_PADDING</text>
<text x="412.5" y="494" fill="#c9ced7" textLength="95" lengthAdjust="spacingAndGlyphs" text-anchor="middle">TEXT_ALIGNMENT</text>
<text x="542" y="69" fill="#c9ced7" textLength="159" lengthAdjust="spacingAndGlyphs">Control properties editor</text>
<text x="535" y="97" fill="#c9ced7" textLength="98" lengthAdjust="spacingAndGlyphs">Property Editor</text>
<text x="532" y="119" fill="#c9ced7" textLength="37" lengthAdjust="spacingAndGlyphs">Value:</text>
<text x="848.5" y="120" fill="#c9ced7" textLength="7" lengthAdjust="spacingAndGlyphs" text-anchor="middle">0</text>
<text x="578.0" y="645" fill="#c9ced7" textLength="21" lengthAdjust="spacingAndGlyphs" text-anchor="middle">172</text>
<text x="668.0" y="645" fill="#c9ced7" textLength="14" lengthAdjust="spacingAndGlyphs" text-anchor="middle">60</text>
<text x="758.0" y="645" fill="#c9ced7" textLength="14" lengthAdjust="spacingAndGlyphs" text-anchor="middle">60</text>
<text x="814" y="645" fill="#c9ced7" textLength="56" lengthAdjust="spacingAndGlyphs">AC3C3CFF</text>
<text x="557" y="683" fill="#c9ced7" textLength="54" lengthAdjust="spacingAndGlyphs">PALETTE:</text>
<text x="541" y="733" fill="#4b525b" textLength="96" lengthAdjust="spacingAndGlyphs">Text Alignment:</text>
<text x="676" y="733" fill="#4b525b" textLength="28" lengthAdjust="spacingAndGlyphs">LEFT</text>
<text x="748" y="733" fill="#4b525b" textLength="42" lengthAdjust="spacingAndGlyphs">CENTER</text>
<text x="831" y="733" fill="#4b525b" textLength="32" lengthAdjust="spacingAndGlyphs">RIGHT</text>
<text x="937" y="69" fill="#c9ced7" textLength="133" lengthAdjust="spacingAndGlyphs">Font Atlas Generation</text>
<text x="1012" y="101" fill="#c9ced7" textLength="56" lengthAdjust="spacingAndGlyphs">Gen Size:</text>
<text x="1120.0" y="101" fill="#c9ced7" textLength="14" lengthAdjust="spacingAndGlyphs" text-anchor="middle">16</text>
<text x="1259" y="101" fill="#c9ced7" textLength="53" lengthAdjust="spacingAndGlyphs">Charset:</text>
<text x="1408.5" y="101" fill="#c9ced7" textLength="74" lengthAdjust="spacingAndGlyphs" text-anchor="middle">ISO-8859-15</text>
<text x="1522" y="101" fill="#c9ced7" textLength="20" lengthAdjust="spacingAndGlyphs" text-anchor="middle">2/2</text>
<text x="1565" y="101" fill="#c9ced7" textLength="72" lengthAdjust="spacingAndGlyphs">Shapes rec:</text>
<text x="1030.3" y="293" fill="#ffffff" textLength="5" lengthAdjust="spacingAndGlyphs" text-anchor="middle" font-size="13">!</text>
<text x="1040.7" y="293" fill="#ffffff" textLength="7" lengthAdjust="spacingAndGlyphs" text-anchor="middle" font-size="13">&quot;</text>
<text x="1053" y="293" fill="#ffffff" textLength="7" lengthAdjust="spacingAndGlyphs" text-anchor="middle" font-size="13">#</text>
<text x="1066.5" y="294" fill="#ffffff" textLength="7" lengthAdjust="spacingAndGlyphs" text-anchor="middle" font-size="13">$</text>
<text x="1080.5" y="293" fill="#ffffff" textLength="8" lengthAdjust="spacingAndGlyphs" text-anchor="middle" font-size="13">%</text>
<text x="1094.5" y="293" fill="#ffffff" textLength="7" lengthAdjust="spacingAndGlyphs" text-anchor="middle" font-size="13">&amp;</text>
<text x="1105.6" y="293" fill="#ffffff" textLength="5" lengthAdjust="spacingAndGlyphs" text-anchor="middle" font-size="13">&#x27;</text>
<text x="1115.3" y="293" fill="#ffffff" textLength="7" lengthAdjust="spacingAndGlyphs" text-anchor="middle" font-size="13">(</text>
<text x="1126.7" y="293" fill="#ffffff" textLength="7" lengthAdjust="spacingAndGlyphs" text-anchor="middle" font-size="13">)</text>
<text x="1138.5" y="292" fill="#ffffff" textLength="7" lengthAdjust="spacingAndGlyphs" text-anchor="middle" font-size="13">*</text>
<text x="1151.2" y="291" fill="#ffffff" textLength="7" lengthAdjust="spacingAndGlyphs" text-anchor="middle" font-size="13">+</text>
<text x="1163.3" y="285" fill="#ffffff" textLength="5" lengthAdjust="spacingAndGlyphs" text-anchor="middle" font-size="13">,</text>
<text x="1174.1" y="288" fill="#ffffff" textLength="7" lengthAdjust="spacingAndGlyphs" text-anchor="middle" font-size="13">-</text>
<text x="1184.7" y="285" fill="#ffffff" textLength="5" lengthAdjust="spacingAndGlyphs" text-anchor="middle" font-size="13">.</text>
<text x="1193.7" y="293" fill="#ffffff" textLength="7" lengthAdjust="spacingAndGlyphs" text-anchor="middle" font-size="13">/</text>
<text x="1206.4" y="293" fill="#ffffff" textLength="7" lengthAdjust="spacingAndGlyphs" text-anchor="middle" font-size="13">0</text>
<text x="1219.2" y="293" fill="#ffffff" textLength="7" lengthAdjust="spacingAndGlyphs" text-anchor="middle" font-size="13">1</text>
<text x="1230.7" y="293" fill="#ffffff" textLength="7" lengthAdjust="spacingAndGlyphs" text-anchor="middle" font-size="13">2</text>
<text x="1243.6" y="293" fill="#ffffff" textLength="7" lengthAdjust="spacingAndGlyphs" text-anchor="middle" font-size="13">3</text>
<text x="1256.4" y="293" fill="#ffffff" textLength="7" lengthAdjust="spacingAndGlyphs" text-anchor="middle" font-size="13">4</text>
<text x="1269.4" y="293" fill="#ffffff" textLength="7" lengthAdjust="spacingAndGlyphs" text-anchor="middle" font-size="13">5</text>
<text x="1282.5" y="293" fill="#ffffff" textLength="7" lengthAdjust="spacingAndGlyphs" text-anchor="middle" font-size="13">6</text>
<text x="1295.6" y="293" fill="#ffffff" textLength="7" lengthAdjust="spacingAndGlyphs" text-anchor="middle" font-size="13">7</text>
<text x="1308.3" y="293" fill="#ffffff" textLength="7" lengthAdjust="spacingAndGlyphs" text-anchor="middle" font-size="13">8</text>
<text x="1321.4" y="293" fill="#ffffff" textLength="7" lengthAdjust="spacingAndGlyphs" text-anchor="middle" font-size="13">9</text>
<text x="1332.7" y="290" fill="#ffffff" textLength="5" lengthAdjust="spacingAndGlyphs" text-anchor="middle" font-size="13">:</text>
<text x="1342" y="290" fill="#ffffff" textLength="5" lengthAdjust="spacingAndGlyphs" text-anchor="middle" font-size="13">;</text>
<text x="1352.6" y="291" fill="#ffffff" textLength="7" lengthAdjust="spacingAndGlyphs" text-anchor="middle" font-size="13">&lt;</text>
<text x="1363.9" y="290" fill="#ffffff" textLength="7" lengthAdjust="spacingAndGlyphs" text-anchor="middle" font-size="13">=</text>
<text x="1375.3" y="291" fill="#ffffff" textLength="7" lengthAdjust="spacingAndGlyphs" text-anchor="middle" font-size="13">&gt;</text>
<text x="1387.7" y="293" fill="#ffffff" textLength="7" lengthAdjust="spacingAndGlyphs" text-anchor="middle" font-size="13">?</text>
<text x="1401.4" y="293" fill="#ffffff" textLength="8" lengthAdjust="spacingAndGlyphs" text-anchor="middle" font-size="13">@</text>
<text x="1415.5" y="293" fill="#ffffff" textLength="7" lengthAdjust="spacingAndGlyphs" text-anchor="middle" font-size="13">A</text>
<text x="1428.5" y="293" fill="#ffffff" textLength="7" lengthAdjust="spacingAndGlyphs" text-anchor="middle" font-size="13">B</text>
<text x="1441.6" y="293" fill="#ffffff" textLength="7" lengthAdjust="spacingAndGlyphs" text-anchor="middle" font-size="13">C</text>
<text x="1454.6" y="293" fill="#ffffff" textLength="7" lengthAdjust="spacingAndGlyphs" text-anchor="middle" font-size="13">D</text>
<text x="1467.4" y="293" fill="#ffffff" textLength="7" lengthAdjust="spacingAndGlyphs" text-anchor="middle" font-size="13">E</text>
<text x="1480.1" y="293" fill="#ffffff" textLength="7" lengthAdjust="spacingAndGlyphs" text-anchor="middle" font-size="13">F</text>
<text x="1493.6" y="293" fill="#ffffff" textLength="7" lengthAdjust="spacingAndGlyphs" text-anchor="middle" font-size="13">G</text>
<text x="1506.6" y="293" fill="#ffffff" textLength="7" lengthAdjust="spacingAndGlyphs" text-anchor="middle" font-size="13">H</text>
<text x="1018.8" y="317" fill="#ffffff" textLength="5" lengthAdjust="spacingAndGlyphs" text-anchor="middle" font-size="13">I</text>
<text x="1030" y="317" fill="#ffffff" textLength="7" lengthAdjust="spacingAndGlyphs" text-anchor="middle" font-size="13">J</text>
<text x="1042.5" y="317" fill="#ffffff" textLength="7" lengthAdjust="spacingAndGlyphs" text-anchor="middle" font-size="13">K</text>
<text x="1055.4" y="317" fill="#ffffff" textLength="7" lengthAdjust="spacingAndGlyphs" text-anchor="middle" font-size="13">L</text>
<text x="1069.6" y="317" fill="#ffffff" textLength="8" lengthAdjust="spacingAndGlyphs" text-anchor="middle" font-size="13">M</text>
<text x="1083.5" y="317" fill="#ffffff" textLength="7" lengthAdjust="spacingAndGlyphs" text-anchor="middle" font-size="13">N</text>
<text x="1096.4" y="317" fill="#ffffff" textLength="7" lengthAdjust="spacingAndGlyphs" text-anchor="middle" font-size="13">O</text>
<text x="1109.3" y="317" fill="#ffffff" textLength="7" lengthAdjust="spacingAndGlyphs" text-anchor="middle" font-size="13">P</text>
<text x="1122.4" y="317" fill="#ffffff" textLength="7" lengthAdjust="spacingAndGlyphs" text-anchor="middle" font-size="13">Q</text>
<text x="1135.5" y="317" fill="#ffffff" textLength="7" lengthAdjust="spacingAndGlyphs" text-anchor="middle" font-size="13">R</text>
<text x="1148.4" y="317" fill="#ffffff" textLength="7" lengthAdjust="spacingAndGlyphs" text-anchor="middle" font-size="13">S</text>
<text x="1161.3" y="317" fill="#ffffff" textLength="7" lengthAdjust="spacingAndGlyphs" text-anchor="middle" font-size="13">T</text>
<text x="1174.1" y="317" fill="#ffffff" textLength="7" lengthAdjust="spacingAndGlyphs" text-anchor="middle" font-size="13">U</text>
<text x="1187.1" y="317" fill="#ffffff" textLength="7" lengthAdjust="spacingAndGlyphs" text-anchor="middle" font-size="13">V</text>
<text x="1200.9" y="317" fill="#ffffff" textLength="8" lengthAdjust="spacingAndGlyphs" text-anchor="middle" font-size="13">W</text>
<text x="1215.1" y="317" fill="#ffffff" textLength="7" lengthAdjust="spacingAndGlyphs" text-anchor="middle" font-size="13">X</text>
<text x="1228.3" y="317" fill="#ffffff" textLength="7" lengthAdjust="spacingAndGlyphs" text-anchor="middle" font-size="13">Y</text>
<text x="1241.3" y="317" fill="#ffffff" textLength="7" lengthAdjust="spacingAndGlyphs" text-anchor="middle" font-size="13">Z</text>
<text x="1253.1" y="317" fill="#ffffff" textLength="7" lengthAdjust="spacingAndGlyphs" text-anchor="middle" font-size="13">[</text>
<text x="1263.2" y="317" fill="#ffffff" textLength="7" lengthAdjust="spacingAndGlyphs" text-anchor="middle" font-size="13">\</text>
<text x="1275.6" y="317" fill="#ffffff" textLength="7" lengthAdjust="spacingAndGlyphs" text-anchor="middle" font-size="13">]</text>
<text x="1287.6" y="317" fill="#ffffff" textLength="7" lengthAdjust="spacingAndGlyphs" text-anchor="middle" font-size="13">^</text>
<text x="1300.4" y="307" fill="#ffffff" textLength="7" lengthAdjust="spacingAndGlyphs" text-anchor="middle" font-size="13">_</text>
<text x="1312" y="317" fill="#ffffff" textLength="5" lengthAdjust="spacingAndGlyphs" text-anchor="middle" font-size="13">`</text>
<text x="1323.5" y="315" fill="#ffffff" textLength="7" lengthAdjust="spacingAndGlyphs" text-anchor="middle" font-size="13">a</text>
<text x="1336.1" y="317" fill="#ffffff" textLength="7" lengthAdjust="spacingAndGlyphs" text-anchor="middle" font-size="13">b</text>
<text x="1349.2" y="315" fill="#ffffff" textLength="7" lengthAdjust="spacingAndGlyphs" text-anchor="middle" font-size="13">c</text>
<text x="1362.2" y="317" fill="#ffffff" textLength="7" lengthAdjust="spacingAndGlyphs" text-anchor="middle" font-size="13">d</text>
<text x="1375.6" y="315" fill="#ffffff" textLength="7" lengthAdjust="spacingAndGlyphs" text-anchor="middle" font-size="13">e</text>
<text x="1388" y="317" fill="#ffffff" textLength="7" lengthAdjust="spacingAndGlyphs" text-anchor="middle" font-size="13">f</text>
<text x="1400.5" y="315" fill="#ffffff" textLength="7" lengthAdjust="spacingAndGlyphs" text-anchor="middle" font-size="13">g</text>
<text x="1413.1" y="317" fill="#ffffff" textLength="7" lengthAdjust="spacingAndGlyphs" text-anchor="middle" font-size="13">h</text>
<text x="1424.4" y="317" fill="#ffffff" textLength="5" lengthAdjust="spacingAndGlyphs" text-anchor="middle" font-size="13">i</text>
<text x="1435.8" y="317" fill="#ffffff" textLength="7" lengthAdjust="spacingAndGlyphs" text-anchor="middle" font-size="13">j</text>
<text x="1448.6" y="317" fill="#ffffff" textLength="7" lengthAdjust="spacingAndGlyphs" text-anchor="middle" font-size="13">k</text>
<text x="1459.6" y="317" fill="#ffffff" textLength="5" lengthAdjust="spacingAndGlyphs" text-anchor="middle" font-size="13">l</text>
<text x="1472.5" y="315" fill="#ffffff" textLength="7" lengthAdjust="spacingAndGlyphs" text-anchor="middle" font-size="13">m</text>
<text x="1486.4" y="315" fill="#ffffff" textLength="7" lengthAdjust="spacingAndGlyphs" text-anchor="middle" font-size="13">n</text>
<text x="1499.3" y="315" fill="#ffffff" textLength="7" lengthAdjust="spacingAndGlyphs" text-anchor="middle" font-size="13">o</text>
<text x="1512.4" y="315" fill="#ffffff" textLength="7" lengthAdjust="spacingAndGlyphs" text-anchor="middle" font-size="13">p</text>
<text x="1020.2" y="339" fill="#ffffff" textLength="7" lengthAdjust="spacingAndGlyphs" text-anchor="middle" font-size="13">q</text>
<text x="1033" y="339" fill="#ffffff" textLength="7" lengthAdjust="spacingAndGlyphs" text-anchor="middle" font-size="13">r</text>
<text x="1046.3" y="339" fill="#ffffff" textLength="7" lengthAdjust="spacingAndGlyphs" text-anchor="middle" font-size="13">s</text>
<text x="1059" y="341" fill="#ffffff" textLength="7" lengthAdjust="spacingAndGlyphs" text-anchor="middle" font-size="13">t</text>
<text x="1071.2" y="339" fill="#ffffff" textLength="7" lengthAdjust="spacingAndGlyphs" text-anchor="middle" font-size="13">u</text>
<text x="1084.2" y="339" fill="#ffffff" textLength="7" lengthAdjust="spacingAndGlyphs" text-anchor="middle" font-size="13">v</text>
<text x="1098.3" y="339" fill="#ffffff" textLength="7" lengthAdjust="spacingAndGlyphs" text-anchor="middle" font-size="13">w</text>
<text x="1112.5" y="339" fill="#ffffff" textLength="7" lengthAdjust="spacingAndGlyphs" text-anchor="middle" font-size="13">x</text>
<text x="1125.4" y="339" fill="#ffffff" textLength="7" lengthAdjust="spacingAndGlyphs" text-anchor="middle" font-size="13">y</text>
<text x="1138.4" y="339" fill="#ffffff" textLength="7" lengthAdjust="spacingAndGlyphs" text-anchor="middle" font-size="13">z</text>
<text x="1150.8" y="341" fill="#ffffff" textLength="7" lengthAdjust="spacingAndGlyphs" text-anchor="middle" font-size="13">{</text>
<text x="1161.3" y="341" fill="#ffffff" textLength="5" lengthAdjust="spacingAndGlyphs" text-anchor="middle" font-size="13">|</text>
<text x="1171.8" y="341" fill="#ffffff" textLength="7" lengthAdjust="spacingAndGlyphs" text-anchor="middle" font-size="13">}</text>
<text x="1184.7" y="337" fill="#ffffff" textLength="7" lengthAdjust="spacingAndGlyphs" text-anchor="middle" font-size="13">~</text>
<text x="1196.6" y="339" fill="#ffffff" textLength="5" lengthAdjust="spacingAndGlyphs" text-anchor="middle" font-size="13">¡</text>
<text x="1207.3" y="340" fill="#ffffff" textLength="7" lengthAdjust="spacingAndGlyphs" text-anchor="middle" font-size="13">¢</text>
<text x="1220.8" y="341" fill="#ffffff" textLength="7" lengthAdjust="spacingAndGlyphs" text-anchor="middle" font-size="13">£</text>
<text x="1235" y="341" fill="#ffffff" textLength="7" lengthAdjust="spacingAndGlyphs" text-anchor="middle" font-size="13">€</text>
<text x="1248.3" y="341" fill="#ffffff" textLength="7" lengthAdjust="spacingAndGlyphs" text-anchor="middle" font-size="13">¥</text>
<text x="1261.2" y="344" fill="#ffffff" textLength="7" lengthAdjust="spacingAndGlyphs" text-anchor="middle" font-size="13">Š</text>
<text x="1282.5" y="342" fill="#ffffff" textLength="7" lengthAdjust="spacingAndGlyphs" text-anchor="middle" font-size="13">š</text>
<text x="1296.5" y="341" fill="#ffffff" textLength="7" lengthAdjust="spacingAndGlyphs" text-anchor="middle" font-size="13">©</text>
<text x="1318.9" y="338" fill="#ffffff" textLength="7" lengthAdjust="spacingAndGlyphs" text-anchor="middle" font-size="13">«</text>
<text x="1332.4" y="337" fill="#ffffff" textLength="7" lengthAdjust="spacingAndGlyphs" text-anchor="middle" font-size="13">¬</text>
<text x="1346.4" y="341" fill="#ffffff" textLength="7" lengthAdjust="spacingAndGlyphs" text-anchor="middle" font-size="13">®</text>
<text x="1367.7" y="341" fill="#ffffff" textLength="7" lengthAdjust="spacingAndGlyphs" text-anchor="middle" font-size="13">°</text>
<text x="1380.5" y="339" fill="#ffffff" textLength="7" lengthAdjust="spacingAndGlyphs" text-anchor="middle" font-size="13">±</text>
<text x="1409.4" y="344" fill="#ffffff" textLength="7" lengthAdjust="spacingAndGlyphs" text-anchor="middle" font-size="13">Ž</text>
<text x="1422.3" y="339" fill="#ffffff" textLength="7" lengthAdjust="spacingAndGlyphs" text-anchor="middle" font-size="13">µ</text>
<text x="1436.5" y="341" fill="#ffffff" textLength="7" lengthAdjust="spacingAndGlyphs" text-anchor="middle" font-size="13">¶</text>
<text x="1448.5" y="337" fill="#ffffff" textLength="5" lengthAdjust="spacingAndGlyphs" text-anchor="middle" font-size="13">·</text>
<text x="1459.6" y="342" fill="#ffffff" textLength="7" lengthAdjust="spacingAndGlyphs" text-anchor="middle" font-size="13">ž</text>
<text x="1488.7" y="338" fill="#ffffff" textLength="7" lengthAdjust="spacingAndGlyphs" text-anchor="middle" font-size="13">»</text>
<text x="1504.6" y="341" fill="#ffffff" textLength="8" lengthAdjust="spacingAndGlyphs" text-anchor="middle" font-size="13">Œ</text>
<text x="1022.6" y="363" fill="#ffffff" textLength="8" lengthAdjust="spacingAndGlyphs" text-anchor="middle" font-size="13">œ</text>
<text x="1037.5" y="367" fill="#ffffff" textLength="7" lengthAdjust="spacingAndGlyphs" text-anchor="middle" font-size="13">Ÿ</text>
<text x="1050.2" y="363" fill="#ffffff" textLength="7" lengthAdjust="spacingAndGlyphs" text-anchor="middle" font-size="13">¿</text>
<text x="1063.4" y="368" fill="#ffffff" textLength="7" lengthAdjust="spacingAndGlyphs" text-anchor="middle" font-size="13">À</text>
<text x="1076.4" y="368" fill="#ffffff" textLength="7" lengthAdjust="spacingAndGlyphs" text-anchor="middle" font-size="13">Á</text>
<text x="1089.5" y="368" fill="#ffffff" textLength="7" lengthAdjust="spacingAndGlyphs" text-anchor="middle" font-size="13">Â</text>
<text x="1102.5" y="368" fill="#ffffff" textLength="7" lengthAdjust="spacingAndGlyphs" text-anchor="middle" font-size="13">Ã</text>
<text x="1116.4" y="368" fill="#ffffff" textLength="7" lengthAdjust="spacingAndGlyphs" text-anchor="middle" font-size="13">Ä</text>
<text x="1129.4" y="369" fill="#ffffff" textLength="7" lengthAdjust="spacingAndGlyphs" text-anchor="middle" font-size="13">Å</text>
<text x="1144.3" y="365" fill="#ffffff" textLength="8" lengthAdjust="spacingAndGlyphs" text-anchor="middle" font-size="13">Æ</text>
<text x="1159.4" y="365" fill="#ffffff" textLength="7" lengthAdjust="spacingAndGlyphs" text-anchor="middle" font-size="13">Ç</text>
<text x="1172.2" y="368" fill="#ffffff" textLength="7" lengthAdjust="spacingAndGlyphs" text-anchor="middle" font-size="13">È</text>
<text x="1185.4" y="368" fill="#ffffff" textLength="7" lengthAdjust="spacingAndGlyphs" text-anchor="middle" font-size="13">É</text>
<text x="1198.4" y="368" fill="#ffffff" textLength="7" lengthAdjust="spacingAndGlyphs" text-anchor="middle" font-size="13">Ê</text>
<text x="1211.4" y="368" fill="#ffffff" textLength="7" lengthAdjust="spacingAndGlyphs" text-anchor="middle" font-size="13">Ë</text>
<text x="1222.9" y="368" fill="#ffffff" textLength="5" lengthAdjust="spacingAndGlyphs" text-anchor="middle" font-size="13">Ì</text>
<text x="1232.1" y="368" fill="#ffffff" textLength="5" lengthAdjust="spacingAndGlyphs" text-anchor="middle" font-size="13">Í</text>
<text x="1243.2" y="368" fill="#ffffff" textLength="5" lengthAdjust="spacingAndGlyphs" text-anchor="middle" font-size="13">Î</text>
<text x="1254.1" y="368" fill="#ffffff" textLength="5" lengthAdjust="spacingAndGlyphs" text-anchor="middle" font-size="13">Ï</text>
<text x="1266.6" y="365" fill="#ffffff" textLength="7" lengthAdjust="spacingAndGlyphs" text-anchor="middle" font-size="13">Ð</text>
<text x="1280.7" y="368" fill="#ffffff" textLength="7" lengthAdjust="spacingAndGlyphs" text-anchor="middle" font-size="13">Ñ</text>
<text x="1294.5" y="368" fill="#ffffff" textLength="7" lengthAdjust="spacingAndGlyphs" text-anchor="middle" font-size="13">Ò</text>
<text x="1307.5" y="368" fill="#ffffff" textLength="7" lengthAdjust="spacingAndGlyphs" text-anchor="middle" font-size="13">Ó</text>
<text x="1320.6" y="368" fill="#ffffff" textLength="7" lengthAdjust="spacingAndGlyphs" text-anchor="middle" font-size="13">Ô</text>
<text x="1333.6" y="368" fill="#ffffff" textLength="7" lengthAdjust="spacingAndGlyphs" text-anchor="middle" font-size="13">Õ</text>
<text x="1347.1" y="368" fill="#ffffff" textLength="7" lengthAdjust="spacingAndGlyphs" text-anchor="middle" font-size="13">Ö</text>
<text x="1360.6" y="362" fill="#ffffff" textLength="7" lengthAdjust="spacingAndGlyphs" text-anchor="middle" font-size="13">×</text>
<text x="1373.9" y="365" fill="#ffffff" textLength="7" lengthAdjust="spacingAndGlyphs" text-anchor="middle" font-size="13">Ø</text>
<text x="1388.4" y="368" fill="#ffffff" textLength="7" lengthAdjust="spacingAndGlyphs" text-anchor="middle" font-size="13">Ù</text>
<text x="1401.4" y="368" fill="#ffffff" textLength="7" lengthAdjust="spacingAndGlyphs" text-anchor="middle" font-size="13">Ú</text>
<text x="1414.5" y="368" fill="#ffffff" textLength="7" lengthAdjust="spacingAndGlyphs" text-anchor="middle" font-size="13">Û</text>
<text x="1427.6" y="368" fill="#ffffff" textLength="7" lengthAdjust="spacingAndGlyphs" text-anchor="middle" font-size="13">Ü</text>
<text x="1440.6" y="368" fill="#ffffff" textLength="7" lengthAdjust="spacingAndGlyphs" text-anchor="middle" font-size="13">Ý</text>
<text x="1453.4" y="365" fill="#ffffff" textLength="7" lengthAdjust="spacingAndGlyphs" text-anchor="middle" font-size="13">Þ</text>
<text x="1466.3" y="365" fill="#ffffff" textLength="7" lengthAdjust="spacingAndGlyphs" text-anchor="middle" font-size="13">ß</text>
<text x="1479.4" y="366" fill="#ffffff" textLength="7" lengthAdjust="spacingAndGlyphs" text-anchor="middle" font-size="13">à</text>
<text x="1492.6" y="366" fill="#ffffff" textLength="7" lengthAdjust="spacingAndGlyphs" text-anchor="middle" font-size="13">á</text>
<text x="1505.5" y="366" fill="#ffffff" textLength="7" lengthAdjust="spacingAndGlyphs" text-anchor="middle" font-size="13">â</text>
<text x="1020.6" y="390" fill="#ffffff" textLength="7" lengthAdjust="spacingAndGlyphs" text-anchor="middle" font-size="13">ã</text>
<text x="1034.5" y="390" fill="#ffffff" textLength="7" lengthAdjust="spacingAndGlyphs" text-anchor="middle" font-size="13">ä</text>
<text x="1047.5" y="391" fill="#ffffff" textLength="7" lengthAdjust="spacingAndGlyphs" text-anchor="middle" font-size="13">å</text>
<text x="1062.5" y="387" fill="#ffffff" textLength="8" lengthAdjust="spacingAndGlyphs" text-anchor="middle" font-size="13">æ</text>
<text x="1077.4" y="387" fill="#ffffff" textLength="7" lengthAdjust="spacingAndGlyphs" text-anchor="middle" font-size="13">ç</text>
<text x="1090.3" y="390" fill="#ffffff" textLength="7" lengthAdjust="spacingAndGlyphs" text-anchor="middle" font-size="13">è</text>
<text x="1103.4" y="390" fill="#ffffff" textLength="7" lengthAdjust="spacingAndGlyphs" text-anchor="middle" font-size="13">é</text>
<text x="1116.4" y="390" fill="#ffffff" textLength="7" lengthAdjust="spacingAndGlyphs" text-anchor="middle" font-size="13">ê</text>
<text x="1129.4" y="390" fill="#ffffff" textLength="7" lengthAdjust="spacingAndGlyphs" text-anchor="middle" font-size="13">ë</text>
<text x="1140.7" y="390" fill="#ffffff" textLength="5" lengthAdjust="spacingAndGlyphs" text-anchor="middle" font-size="13">ì</text>
<text x="1150.4" y="390" fill="#ffffff" textLength="5" lengthAdjust="spacingAndGlyphs" text-anchor="middle" font-size="13">í</text>
<text x="1161.4" y="390" fill="#ffffff" textLength="5" lengthAdjust="spacingAndGlyphs" text-anchor="middle" font-size="13">î</text>
<text x="1172.4" y="390" fill="#ffffff" textLength="5" lengthAdjust="spacingAndGlyphs" text-anchor="middle" font-size="13">ï</text>
<text x="1184.7" y="389" fill="#ffffff" textLength="7" lengthAdjust="spacingAndGlyphs" text-anchor="middle" font-size="13">ð</text>
<text x="1198.5" y="390" fill="#ffffff" textLength="7" lengthAdjust="spacingAndGlyphs" text-anchor="middle" font-size="13">ñ</text>
<text x="1212.4" y="390" fill="#ffffff" textLength="7" lengthAdjust="spacingAndGlyphs" text-anchor="middle" font-size="13">ò</text>
<text x="1225.3" y="390" fill="#ffffff" textLength="7" lengthAdjust="spacingAndGlyphs" text-anchor="middle" font-size="13">ó</text>
<text x="1238.3" y="390" fill="#ffffff" textLength="7" lengthAdjust="spacingAndGlyphs" text-anchor="middle" font-size="13">ô</text>
<text x="1251.3" y="390" fill="#ffffff" textLength="7" lengthAdjust="spacingAndGlyphs" text-anchor="middle" font-size="13">õ</text>
<text x="1265.2" y="390" fill="#ffffff" textLength="7" lengthAdjust="spacingAndGlyphs" text-anchor="middle" font-size="13">ö</text>
<text x="1278.6" y="386" fill="#ffffff" textLength="7" lengthAdjust="spacingAndGlyphs" text-anchor="middle" font-size="13">÷</text>
<text x="1292.1" y="387" fill="#ffffff" textLength="7" lengthAdjust="spacingAndGlyphs" text-anchor="middle" font-size="13">ø</text>
<text x="1306.6" y="390" fill="#ffffff" textLength="7" lengthAdjust="spacingAndGlyphs" text-anchor="middle" font-size="13">ù</text>
<text x="1319.6" y="390" fill="#ffffff" textLength="7" lengthAdjust="spacingAndGlyphs" text-anchor="middle" font-size="13">ú</text>
<text x="1332.7" y="390" fill="#ffffff" textLength="7" lengthAdjust="spacingAndGlyphs" text-anchor="middle" font-size="13">û</text>
<text x="1345.5" y="390" fill="#ffffff" textLength="7" lengthAdjust="spacingAndGlyphs" text-anchor="middle" font-size="13">ü</text>
<text x="1358.4" y="390" fill="#ffffff" textLength="7" lengthAdjust="spacingAndGlyphs" text-anchor="middle" font-size="13">ý</text>
<text x="1371.6" y="389" fill="#ffffff" textLength="7" lengthAdjust="spacingAndGlyphs" text-anchor="middle" font-size="13">þ</text>
<text x="1384.7" y="389" fill="#ffffff" textLength="7" lengthAdjust="spacingAndGlyphs" text-anchor="middle" font-size="13">ÿ</text>
<text x="930" y="702" fill="#c9ced7" textLength="130" lengthAdjust="spacingAndGlyphs">Text Drawing Options</text>
<text x="930" y="730" fill="#c9ced7" textLength="62" lengthAdjust="spacingAndGlyphs">Font Size:</text>
<text x="1046.0" y="730" fill="#c9ced7" textLength="14" lengthAdjust="spacingAndGlyphs" text-anchor="middle">16</text>
<text x="1106" y="730" fill="#c9ced7" textLength="52" lengthAdjust="spacingAndGlyphs">Spacing:</text>
<text x="1212.0" y="730" fill="#c9ced7" textLength="7" lengthAdjust="spacingAndGlyphs" text-anchor="middle">0</text>
<text x="1280" y="730" fill="#c9ced7" textLength="75" lengthAdjust="spacingAndGlyphs">sample text</text>
<text x="1827.5" y="97" fill="#c9ced7" textLength="45" lengthAdjust="spacingAndGlyphs" text-anchor="middle">default</text>
<text x="1827.5" y="127" fill="#c9ced7" textLength="60" lengthAdjust="spacingAndGlyphs" text-anchor="middle">Cartridge</text>
<text x="1827.5" y="157" fill="#c9ced7" textLength="70" lengthAdjust="spacingAndGlyphs" text-anchor="middle">hello-world</text>
<text x="1827.5" y="187" fill="#c9ced7" textLength="58" lengthAdjust="spacingAndGlyphs" text-anchor="middle">homespun</text>
<text x="1827.5" y="217" fill="#c9ced7" textLength="70" lengthAdjust="spacingAndGlyphs" text-anchor="middle">Kyrou7Wide</text>
<text x="1827.5" y="247" fill="#c9ced7" textLength="37" lengthAdjust="spacingAndGlyphs" text-anchor="middle">Mecha</text>
<text x="1827.5" y="277" fill="#c9ced7" textLength="54" lengthAdjust="spacingAndGlyphs" text-anchor="middle">PixelIntv</text>
<text x="1827.5" y="307" fill="#e0e0e0" textLength="85" lengthAdjust="spacingAndGlyphs" text-anchor="middle">PixelOperator</text>
<text x="1827.5" y="337" fill="#c9ced7" textLength="55" lengthAdjust="spacingAndGlyphs" text-anchor="middle">v5easter</text>
<text x="1827.5" y="367" fill="#c9ced7" textLength="55" lengthAdjust="spacingAndGlyphs" text-anchor="middle">v5loxical</text>
<text x="1827.5" y="397" fill="#c9ced7" textLength="68" lengthAdjust="spacingAndGlyphs" text-anchor="middle">Westington</text>
<text x="1827.5" y="427" fill="#c9ced7" textLength="28" lengthAdjust="spacingAndGlyphs" text-anchor="middle">2a03</text>
<text x="1827.5" y="457" fill="#c9ced7" textLength="30" lengthAdjust="spacingAndGlyphs" text-anchor="middle">GMSN</text>
<text x="1827.5" y="487" fill="#c9ced7" textLength="88" lengthAdjust="spacingAndGlyphs" text-anchor="middle">CozetteVector</text>
<text x="1827.5" y="517" fill="#c9ced7" textLength="47" lengthAdjust="spacingAndGlyphs" text-anchor="middle">Fairfax</text>
<text x="1827.5" y="547" fill="#c9ced7" textLength="65" lengthAdjust="spacingAndGlyphs" text-anchor="middle">OwreKynge</text>
<text x="1776" y="69" fill="#c9ced7" textLength="27" lengthAdjust="spacingAndGlyphs">Font</text>
<text x="169.0" y="809" fill="#c9ced7" textLength="35" lengthAdjust="spacingAndGlyphs" text-anchor="middle">LABEL</text>
<text x="284.0" y="809" fill="#c9ced7" textLength="42" lengthAdjust="spacingAndGlyphs" text-anchor="middle">BUTTON</text>
<text x="399.0" y="809" fill="#c9ced7" textLength="42" lengthAdjust="spacingAndGlyphs" text-anchor="middle">TOGGLE</text>
<text x="564.0" y="809" fill="#c9ced7" textLength="56" lengthAdjust="spacingAndGlyphs" text-anchor="middle">CHECKBOX</text>
<text x="729.0" y="809" fill="#c9ced7" textLength="39" lengthAdjust="spacingAndGlyphs" text-anchor="middle">SLIDER</text>
<text x="844.0" y="809" fill="#c9ced7" textLength="60" lengthAdjust="spacingAndGlyphs" text-anchor="middle">SLIDERBAR</text>
<text x="959.0" y="809" fill="#c9ced7" textLength="77" lengthAdjust="spacingAndGlyphs" text-anchor="middle">PROGRESSBAR</text>
<text x="1124.0" y="809" fill="#c9ced7" textLength="81" lengthAdjust="spacingAndGlyphs" text-anchor="middle">TOGGLESLIDER</text>
<text x="1309.0" y="809" fill="#c9ced7" textLength="58" lengthAdjust="spacingAndGlyphs" text-anchor="middle">COMBOBOX</text>
<text x="1474.0" y="809" fill="#c9ced7" textLength="79" lengthAdjust="spacingAndGlyphs" text-anchor="middle">DROPDOWNBOX</text>
<text x="1619.0" y="809" fill="#c9ced7" textLength="49" lengthAdjust="spacingAndGlyphs" text-anchor="middle">TEXTBOX</text>
<text x="1734.0" y="809" fill="#c9ced7" textLength="56" lengthAdjust="spacingAndGlyphs" text-anchor="middle">VALUEBOX</text>
<text x="1849.5" y="809" fill="#c9ced7" textLength="46" lengthAdjust="spacingAndGlyphs" text-anchor="middle">SPINNER</text>
<text x="41" y="838" fill="#c9ced7" textLength="44" lengthAdjust="spacingAndGlyphs">NORMAL</text>
<text x="155" y="838" fill="#c9ced7" textLength="32" lengthAdjust="spacingAndGlyphs">Label</text>
<text x="274" y="838" fill="#c9ced7" textLength="40" lengthAdjust="spacingAndGlyphs">Button</text>
<text x="389" y="838" fill="#c9ced7" textLength="39" lengthAdjust="spacingAndGlyphs">Toggle</text>
<text x="485" y="838" fill="#c9ced7" textLength="49" lengthAdjust="spacingAndGlyphs">NoCheck</text>
<text x="593" y="838" fill="#c9ced7" textLength="49" lengthAdjust="spacingAndGlyphs">Checked</text>
<text x="1048" y="838" fill="#e0e0e0" textLength="21" lengthAdjust="spacingAndGlyphs">OFF</text>
<text x="1203" y="838" fill="#e0e0e0" textLength="14" lengthAdjust="spacingAndGlyphs">ON</text>
<text x="1273" y="838" fill="#c9ced7" textLength="58" lengthAdjust="spacingAndGlyphs">ComboBox</text>
<text x="1363.5" y="838" fill="#c9ced7" textLength="20" lengthAdjust="spacingAndGlyphs" text-anchor="middle">1/2</text>
<text x="1445" y="838" fill="#c9ced7" textLength="79" lengthAdjust="spacingAndGlyphs">DropdownBox</text>
<text x="1574" y="838" fill="#c9ced7" textLength="51" lengthAdjust="spacingAndGlyphs">text box</text>
<text x="1734" y="838" fill="#c9ced7" textLength="14" lengthAdjust="spacingAndGlyphs" text-anchor="middle">40</text>
<text x="1849.5" y="838" fill="#c9ced7" textLength="14" lengthAdjust="spacingAndGlyphs" text-anchor="middle">40</text>
<text x="41" y="877" fill="#a6b6ba" textLength="49" lengthAdjust="spacingAndGlyphs">FOCUSED</text>
<text x="155" y="877" fill="#a6b6ba" textLength="32" lengthAdjust="spacingAndGlyphs">Label</text>
<text x="274" y="877" fill="#000000" textLength="40" lengthAdjust="spacingAndGlyphs">Button</text>
<text x="389" y="877" fill="#000000" textLength="39" lengthAdjust="spacingAndGlyphs">Toggle</text>
<text x="485" y="877" fill="#a6b6ba" textLength="49" lengthAdjust="spacingAndGlyphs">NoCheck</text>
<text x="593" y="877" fill="#a6b6ba" textLength="49" lengthAdjust="spacingAndGlyphs">Checked</text>
<text x="1048" y="877" fill="#000000" textLength="21" lengthAdjust="spacingAndGlyphs">OFF</text>
<text x="1203" y="877" fill="#000000" textLength="14" lengthAdjust="spacingAndGlyphs">ON</text>
<text x="1273" y="877" fill="#000000" textLength="58" lengthAdjust="spacingAndGlyphs">ComboBox</text>
<text x="1363.5" y="877" fill="#000000" textLength="20" lengthAdjust="spacingAndGlyphs" text-anchor="middle">1/2</text>
<text x="1445" y="877" fill="#000000" textLength="79" lengthAdjust="spacingAndGlyphs">DropdownBox</text>
<text x="1574" y="877" fill="#a6b6ba" textLength="51" lengthAdjust="spacingAndGlyphs">text box</text>
<text x="1734" y="877" fill="#c9ced7" textLength="14" lengthAdjust="spacingAndGlyphs" text-anchor="middle">40</text>
<text x="1849.5" y="877" fill="#c9ced7" textLength="14" lengthAdjust="spacingAndGlyphs" text-anchor="middle">40</text>
<text x="41" y="916" fill="#e0e0e0" textLength="49" lengthAdjust="spacingAndGlyphs">PRESSED</text>
<text x="155" y="916" fill="#e0e0e0" textLength="32" lengthAdjust="spacingAndGlyphs">Label</text>
<text x="274" y="916" fill="#e0e0e0" textLength="40" lengthAdjust="spacingAndGlyphs">Button</text>
<text x="389" y="916" fill="#e0e0e0" textLength="39" lengthAdjust="spacingAndGlyphs">Toggle</text>
<text x="485" y="916" fill="#e0e0e0" textLength="49" lengthAdjust="spacingAndGlyphs">NoCheck</text>
<text x="593" y="916" fill="#e0e0e0" textLength="49" lengthAdjust="spacingAndGlyphs">Checked</text>
<text x="1048" y="916" fill="#e0e0e0" textLength="21" lengthAdjust="spacingAndGlyphs">OFF</text>
<text x="1203" y="916" fill="#e0e0e0" textLength="14" lengthAdjust="spacingAndGlyphs">ON</text>
<text x="1273" y="916" fill="#e0e0e0" textLength="58" lengthAdjust="spacingAndGlyphs">ComboBox</text>
<text x="1363.5" y="916" fill="#e0e0e0" textLength="20" lengthAdjust="spacingAndGlyphs" text-anchor="middle">1/2</text>
<text x="1445" y="916" fill="#e0e0e0" textLength="79" lengthAdjust="spacingAndGlyphs">DropdownBox</text>
<text x="1574" y="916" fill="#e0e0e0" textLength="51" lengthAdjust="spacingAndGlyphs">text box</text>
<text x="1734" y="916" fill="#e0e0e0" textLength="14" lengthAdjust="spacingAndGlyphs" text-anchor="middle">40</text>
<text x="1849.5" y="916" fill="#e0e0e0" textLength="14" lengthAdjust="spacingAndGlyphs" text-anchor="middle">40</text>
<text x="41" y="955" fill="#4b525b" textLength="53" lengthAdjust="spacingAndGlyphs">DISABLED</text>
<text x="155" y="955" fill="#4b525b" textLength="32" lengthAdjust="spacingAndGlyphs">Label</text>
<text x="274" y="955" fill="#4b525b" textLength="40" lengthAdjust="spacingAndGlyphs">Button</text>
<text x="389" y="955" fill="#4b525b" textLength="39" lengthAdjust="spacingAndGlyphs">Toggle</text>
<text x="485" y="955" fill="#4b525b" textLength="49" lengthAdjust="spacingAndGlyphs">NoCheck</text>
<text x="593" y="955" fill="#4b525b" textLength="49" lengthAdjust="spacingAndGlyphs">Checked</text>
<text x="1048" y="955" fill="#4b525b" textLength="21" lengthAdjust="spacingAndGlyphs">OFF</text>
<text x="1203" y="955" fill="#4b525b" textLength="14" lengthAdjust="spacingAndGlyphs">ON</text>
<text x="1273" y="955" fill="#4b525b" textLength="58" lengthAdjust="spacingAndGlyphs">ComboBox</text>
<text x="1363.5" y="955" fill="#4b525b" textLength="20" lengthAdjust="spacingAndGlyphs" text-anchor="middle">1/2</text>
<text x="1445" y="955" fill="#4b525b" textLength="79" lengthAdjust="spacingAndGlyphs">DropdownBox</text>
<text x="1574" y="955" fill="#4b525b" textLength="51" lengthAdjust="spacingAndGlyphs">text box</text>
<text x="1734" y="955" fill="#4b525b" textLength="14" lengthAdjust="spacingAndGlyphs" text-anchor="middle">40</text>
<text x="1849.5" y="955" fill="#4b525b" textLength="14" lengthAdjust="spacingAndGlyphs" text-anchor="middle">40</text>
<text x="73.5" y="1010" fill="#c9ced7" textLength="72" lengthAdjust="spacingAndGlyphs">Style Name:</text>
<text x="174" y="1010" fill="#c9ced7" textLength="47" lengthAdjust="spacingAndGlyphs">Genesis</text>
<text x="345" y="1010" fill="#c9ced7" textLength="136" lengthAdjust="spacingAndGlyphs">CHANGED PROPERTIES: 0</text>
<text x="1066" y="1010" fill="#c9ced7" textLength="234" lengthAdjust="spacingAndGlyphs">Font File: PixelOperator.ttf [LOADED]</text>
<text x="1373.5" y="1010" fill="#c9ced7" textLength="99" lengthAdjust="spacingAndGlyphs">Codepoints: 189</text>
<text x="1530" y="1010" fill="#c9ced7" textLength="122" lengthAdjust="spacingAndGlyphs">Atlas Size: 512x256</text>
<text x="1702" y="1010" fill="#c9ced7" textLength="195" lengthAdjust="spacingAndGlyphs">Font white rec: [510, 254, 1, 1]</text>
</svg>
</body>
</html>
